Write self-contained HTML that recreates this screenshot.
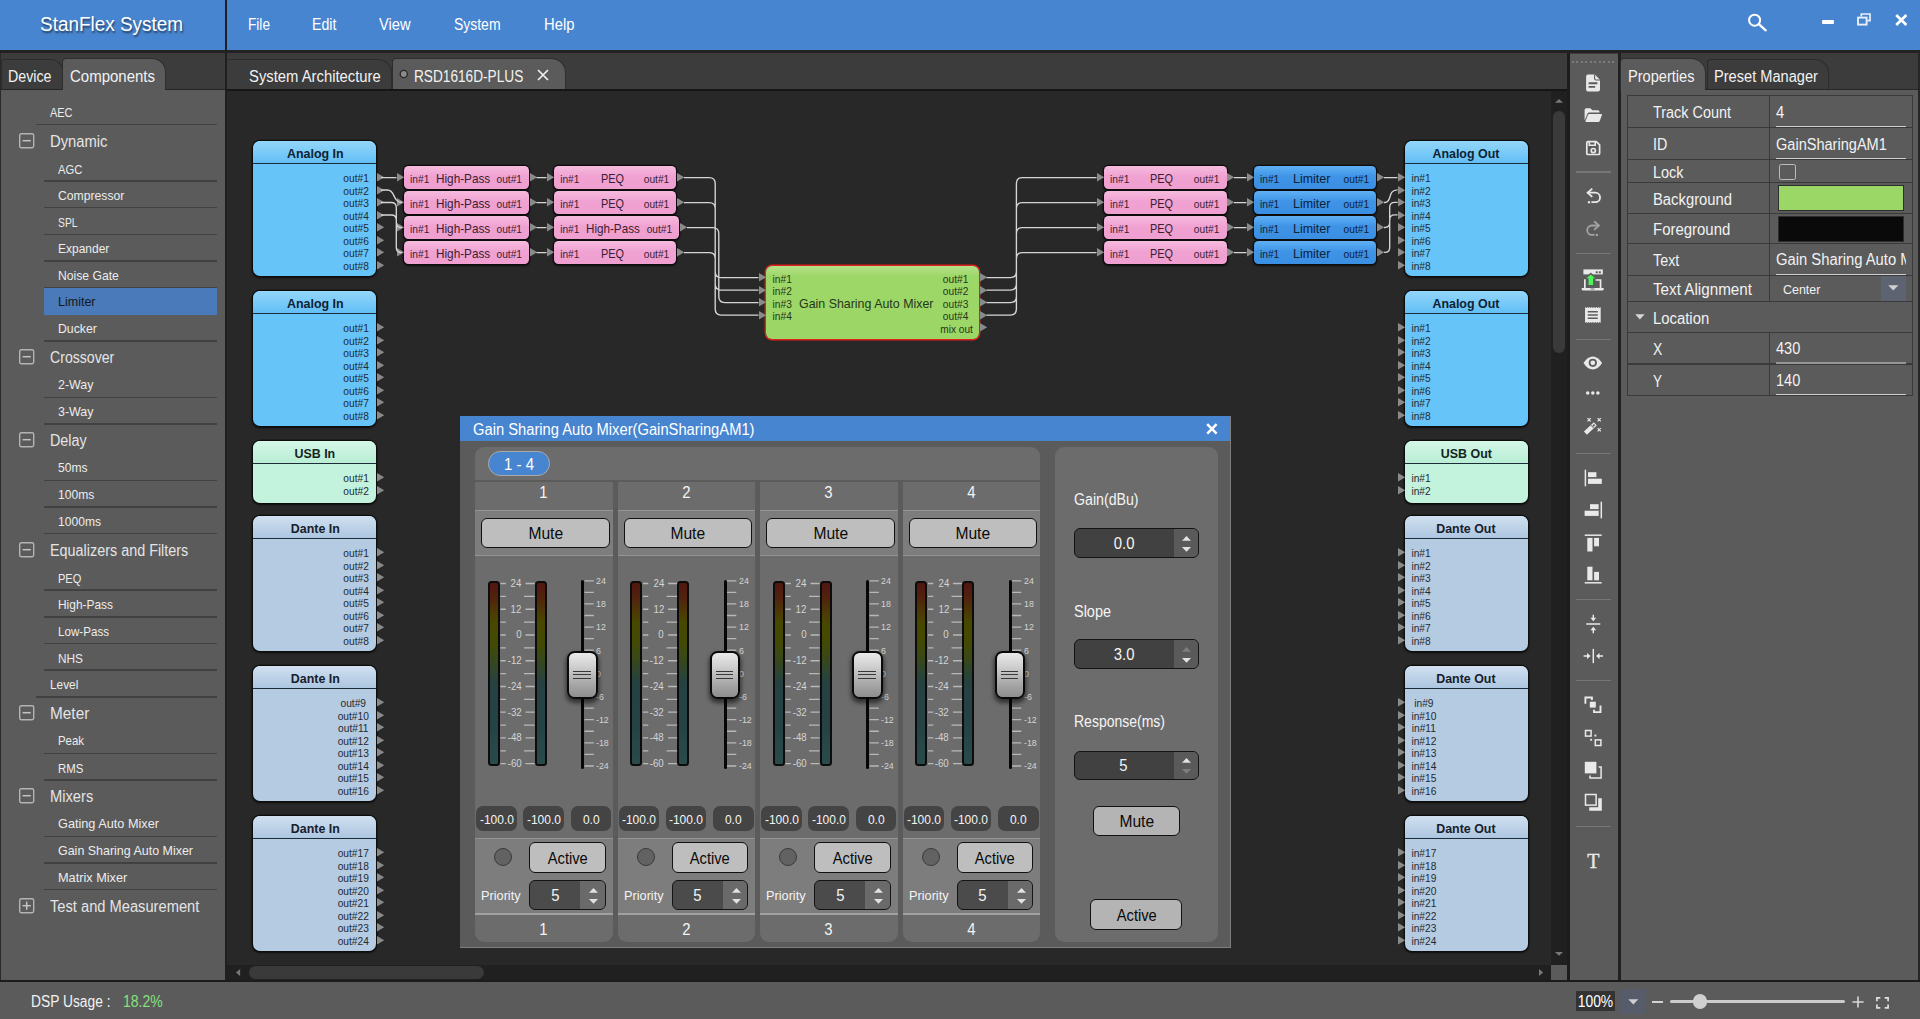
<!DOCTYPE html>
<html lang="en"><head><meta charset="utf-8"><title>StanFlex System</title>
<style>
html,body{margin:0;padding:0;}
body{width:1920px;height:1019px;overflow:hidden;position:relative;background:#3c3c3c;
font-family:"Liberation Sans",sans-serif;}
div,span,svg{position:absolute;box-sizing:border-box;}
.t{white-space:nowrap;line-height:1;display:block;}
svg{overflow:visible;}
</style></head><body>
<div style="left:0px;top:0px;width:1920px;height:50px;background:#4885d0;"></div>
<div style="left:0px;top:50px;width:1920px;height:2.5px;background:#222;"></div>
<div style="left:224.7px;top:0px;width:2.3px;height:981px;background:#202020;"></div>
<span class="t" style="left:35.92px;top:14.4px;font-size:20px;color:#fff;transform:scaleX(0.9460);transform-origin:center center;text-shadow:1px 2px 2px rgba(0,0,0,.55);">StanFlex System</span>
<span class="t" style="left:248px;top:17.08px;font-size:16px;color:#fff;transform:scaleX(0.8533);transform-origin:left center;">File</span>
<span class="t" style="left:312.3px;top:17.08px;font-size:16px;color:#fff;transform:scaleX(0.8850);transform-origin:left center;">Edit</span>
<span class="t" style="left:379.4px;top:17.08px;font-size:16px;color:#fff;transform:scaleX(0.9188);transform-origin:left center;">View</span>
<span class="t" style="left:453.7px;top:17.08px;font-size:16px;color:#fff;transform:scaleX(0.8717);transform-origin:left center;">System</span>
<span class="t" style="left:544.4px;top:17.08px;font-size:16px;color:#fff;transform:scaleX(0.9238);transform-origin:left center;">Help</span>
<svg style="left:1745px;top:8px;" width="30" height="30" viewBox="0 0 30 30"><circle cx="9.6" cy="12.2" r="5.5" fill="none" stroke="#fff" stroke-width="2"/><path d="M13.8 16.2 L20.7 22.3" stroke="#fff" stroke-width="2.4" stroke-linecap="round"/></svg>
<div style="left:1822px;top:20.3px;width:11.6px;height:3.9px;background:#fff;border-radius:1px;"></div>
<svg style="left:1857px;top:13px;" width="15" height="13" viewBox="0 0 15 13"><path d="M4.3 3.6 V1 H13 V7.6 H10.2" fill="none" stroke="#e8eef8" stroke-width="1.7"/><rect x="1" y="4.6" width="8.6" height="7" fill="none" stroke="#e8eef8" stroke-width="1.9"/></svg>
<svg style="left:1895px;top:13.5px;" width="13" height="12" viewBox="0 0 13 12"><path d="M1.2 1 L11.4 11 M11.4 1 L1.2 11" stroke="#fff" stroke-width="2.7"/></svg>
<div style="left:0px;top:52.5px;width:224.7px;height:37.5px;background:#3c3c3c;"></div>
<div style="left:0.5px;top:59.3px;width:62px;height:30.7px;background:#3c3c3c;border:1.3px solid #2c2c2c;border-bottom:none;border-top-right-radius:12px;border-top-left-radius:3px;"></div>
<div style="left:63.3px;top:59.3px;width:102.2px;height:31.2px;background:#5b5b5b;border-top-right-radius:13px;border-top-left-radius:3px;box-shadow:0 0 0 1px #2e2e2e;"></div>
<div style="left:0px;top:88.7px;width:63.3px;height:1.6px;background:#262626;"></div>
<div style="left:165.5px;top:88.7px;width:59.2px;height:1.6px;background:#262626;"></div>
<div style="left:0px;top:90.3px;width:224.7px;height:889.7px;background:#5b5b5b;"></div>
<div style="left:0px;top:52.5px;width:1.2px;height:927.5px;background:#2a2a2a;"></div>
<span class="t" style="left:8px;top:68.98px;font-size:16px;color:#f2f2f2;transform:scaleX(0.8894);transform-origin:left center;">Device</span>
<span class="t" style="left:70px;top:68.98px;font-size:16px;color:#f2f2f2;transform:scaleX(0.9369);transform-origin:left center;">Components</span>
<div style="left:227px;top:52.5px;width:1340.3px;height:37.5px;background:#3c3c3c;"></div>
<div style="left:227px;top:59.3px;width:164.5px;height:30.7px;background:#3c3c3c;border:1.3px solid #2c2c2c;border-bottom:none;border-left:none;border-top-right-radius:14px;"></div>
<div style="left:392.6px;top:59.3px;width:172.4px;height:30.7px;background:#5b5b5b;border-top-right-radius:14px;border-top-left-radius:3px;box-shadow:0 0 0 1px #2e2e2e;"></div>
<span class="t" style="left:248.7px;top:68.98px;font-size:16px;color:#f2f2f2;transform:scaleX(0.9257);transform-origin:left center;">System Architecture</span>
<svg style="left:398.5px;top:69px;" width="10" height="10" viewBox="0 0 10 10"><circle cx="4.8" cy="5" r="3.6" fill="#8a8a8a" stroke="#2a2a2a" stroke-width="1.4"/></svg>
<span class="t" style="left:414.2px;top:68.98px;font-size:16px;color:#f2f2f2;transform:scaleX(0.8535);transform-origin:left center;">RSD1616D-PLUS</span>
<svg style="left:536.5px;top:69px;" width="12" height="12" viewBox="0 0 12 12"><path d="M1 1 L11 11 M11 1 L1 11" stroke="#f0f0f0" stroke-width="1.7"/></svg>
<div style="left:227px;top:88.8px;width:1340.3px;height:2.2px;background:#161616;"></div>
<div style="left:227px;top:91px;width:1340.3px;height:889px;background:#282828;"></div>
<div style="left:1567.3px;top:52.5px;width:2.7px;height:928.5px;background:#1c1c1c;"></div>
<div style="left:1570px;top:54px;width:48.2px;height:926px;background:#5b5b5b;"></div>
<div style="left:1618.2px;top:52.5px;width:2.8px;height:928.5px;background:#202020;"></div>
<div style="left:1621px;top:52.5px;width:299px;height:37.5px;background:#3c3c3c;"></div>
<div style="left:1621px;top:59.3px;width:83.6px;height:31.2px;background:#5b5b5b;border-top-right-radius:14px;border-top-left-radius:3px;box-shadow:0 0 0 1px #2e2e2e;"></div>
<div style="left:1706.6px;top:59.3px;width:122.4px;height:30.7px;background:#3c3c3c;border:1.3px solid #2c2c2c;border-bottom:none;border-top-right-radius:14px;border-top-left-radius:3px;"></div>
<div style="left:1704.6px;top:88.7px;width:215.4px;height:1.6px;background:#262626;"></div>
<div style="left:1621px;top:90.3px;width:299px;height:889.7px;background:#5b5b5b;"></div>
<div style="left:1917.7px;top:52.5px;width:2.3px;height:927.5px;background:#262626;"></div>
<span class="t" style="left:1628px;top:68.98px;font-size:16px;color:#f2f2f2;transform:scaleX(0.9119);transform-origin:left center;">Properties</span>
<span class="t" style="left:1714px;top:68.98px;font-size:16px;color:#f2f2f2;transform:scaleX(0.9127);transform-origin:left center;">Preset Manager</span>
<div style="left:0px;top:979.7px;width:1920px;height:2.3px;background:#1c1c1c;"></div>
<div style="left:0px;top:982px;width:1920px;height:37px;background:#5b5b5b;"></div>
<span class="t" style="left:31px;top:994.08px;font-size:16px;color:#f2f2f2;transform:scaleX(0.8623);transform-origin:left center;">DSP Usage :</span>
<span class="t" style="left:123.3px;top:994.08px;font-size:16px;color:#84e07f;transform:scaleX(0.8751);transform-origin:left center;">18.2%</span>
<div style="left:1576.2px;top:991px;width:39px;height:19.9px;background:#333;"></div>
<span class="t" style="left:1575.24px;top:994.08px;font-size:16px;color:#fff;transform:scaleX(0.8675);transform-origin:center center;">100%</span>
<div style="left:1620px;top:989px;width:25px;height:24.6px;background:#565c69;"></div>
<svg style="left:1627.5px;top:998.5px;" width="11" height="6" viewBox="0 0 11 6"><path d="M0.3 0.3 H10.3 L5.3 5.6 Z" fill="#cfcfcf"/></svg>
<div style="left:1651.7px;top:1001.2px;width:11.6px;height:1.7px;background:#d2d2d2;"></div>
<div style="left:1670px;top:999.9px;width:175px;height:3.3px;background:#cbcbcb;border-radius:2px;"></div>
<div style="left:1692.9px;top:994.2px;width:14.6px;height:14.6px;background:#cfcfcf;border-radius:50%;"></div>
<svg style="left:1851.5px;top:995.5px;" width="12" height="12" viewBox="0 0 12 12"><path d="M6 0.4 V11.6 M0.4 6 H11.6" stroke="#d8d8d8" stroke-width="1.6"/></svg>
<svg style="left:1876px;top:996.5px;" width="13" height="12" viewBox="0 0 13 12"><path d="M0.9 4.2 V0.9 H4.3 M8.7 0.9 H12.1 V4.2 M12.1 7.6 V10.9 H8.7 M4.3 10.9 H0.9 V7.6" fill="none" stroke="#e0e0e0" stroke-width="1.7"/></svg>
<div style="left:36px;top:123.77px;width:181.3px;height:1.4px;background:#414141;"></div>
<span class="t" style="left:50px;top:106.33px;font-size:13.33px;color:#ececec;transform:scaleX(0.8209);transform-origin:left center;">AEC</span>
<svg style="left:18.5px;top:132.77px;" width="15.4" height="15.4" viewBox="0 0 15.4 15.4"><rect x="0.7" y="0.7" width="14" height="14" rx="1.6" fill="none" stroke="#b4b4b4" stroke-width="1.4"/><path d="M3.6 7.7 H11.8" stroke="#c4c4c4" stroke-width="1.5"/></svg>
<span class="t" style="left:50px;top:133.85px;font-size:16px;color:#e4e4e4;transform:scaleX(0.9239);transform-origin:left center;">Dynamic</span>
<div style="left:44px;top:180.18px;width:173.3px;height:1.4px;background:#414141;"></div>
<span class="t" style="left:57.5px;top:162.75px;font-size:13.33px;color:#ececec;transform:scaleX(0.8412);transform-origin:left center;">AGC</span>
<div style="left:44px;top:206.85px;width:173.3px;height:1.4px;background:#414141;"></div>
<span class="t" style="left:57.5px;top:188.62px;font-size:13.33px;color:#ececec;transform:scaleX(0.9133);transform-origin:left center;">Compressor</span>
<div style="left:44px;top:233.52px;width:173.3px;height:1.4px;background:#414141;"></div>
<span class="t" style="left:57.5px;top:216.09px;font-size:13.33px;color:#ececec;transform:scaleX(0.7739);transform-origin:left center;">SPL</span>
<div style="left:44px;top:260.19px;width:173.3px;height:1.4px;background:#414141;"></div>
<span class="t" style="left:57.5px;top:241.95px;font-size:13.33px;color:#ececec;transform:scaleX(0.8990);transform-origin:left center;">Expander</span>
<div style="left:44px;top:286.85px;width:173.3px;height:1.4px;background:#414141;"></div>
<span class="t" style="left:57.5px;top:268.62px;font-size:13.33px;color:#ececec;transform:scaleX(0.9118);transform-origin:left center;">Noise Gate</span>
<div style="left:44px;top:287.85px;width:173.3px;height:26.67px;background:#4a7ab9;"></div>
<span class="t" style="left:57.5px;top:295.29px;font-size:13.33px;color:#101820;transform:scaleX(0.9375);transform-origin:left center;">Limiter</span>
<div style="left:44px;top:340.19px;width:173.3px;height:1.4px;background:#414141;"></div>
<span class="t" style="left:57.5px;top:321.95px;font-size:13.33px;color:#ececec;transform:scaleX(0.9189);transform-origin:left center;">Ducker</span>
<svg style="left:18.5px;top:349.19px;" width="15.4" height="15.4" viewBox="0 0 15.4 15.4"><rect x="0.7" y="0.7" width="14" height="14" rx="1.6" fill="none" stroke="#b4b4b4" stroke-width="1.4"/><path d="M3.6 7.7 H11.8" stroke="#c4c4c4" stroke-width="1.5"/></svg>
<span class="t" style="left:50px;top:350.27px;font-size:16px;color:#e4e4e4;transform:scaleX(0.8819);transform-origin:left center;">Crossover</span>
<div style="left:44px;top:396.6px;width:173.3px;height:1.4px;background:#414141;"></div>
<span class="t" style="left:57.5px;top:378.37px;font-size:13.33px;color:#ececec;transform:scaleX(0.9338);transform-origin:left center;">2-Way</span>
<div style="left:44px;top:423.27px;width:173.3px;height:1.4px;background:#414141;"></div>
<span class="t" style="left:57.5px;top:405.04px;font-size:13.33px;color:#ececec;transform:scaleX(0.9338);transform-origin:left center;">3-Way</span>
<svg style="left:18.5px;top:432.27px;" width="15.4" height="15.4" viewBox="0 0 15.4 15.4"><rect x="0.7" y="0.7" width="14" height="14" rx="1.6" fill="none" stroke="#b4b4b4" stroke-width="1.4"/><path d="M3.6 7.7 H11.8" stroke="#c4c4c4" stroke-width="1.5"/></svg>
<span class="t" style="left:50px;top:433.35px;font-size:16px;color:#e4e4e4;transform:scaleX(0.8971);transform-origin:left center;">Delay</span>
<div style="left:44px;top:479.69px;width:173.3px;height:1.4px;background:#414141;"></div>
<span class="t" style="left:57.5px;top:461.45px;font-size:13.33px;color:#ececec;transform:scaleX(0.9050);transform-origin:left center;">50ms</span>
<div style="left:44px;top:506.35px;width:173.3px;height:1.4px;background:#414141;"></div>
<span class="t" style="left:57.5px;top:488.12px;font-size:13.33px;color:#ececec;transform:scaleX(0.9073);transform-origin:left center;">100ms</span>
<div style="left:44px;top:533.02px;width:173.3px;height:1.4px;background:#414141;"></div>
<span class="t" style="left:57.5px;top:514.79px;font-size:13.33px;color:#ececec;transform:scaleX(0.9067);transform-origin:left center;">1000ms</span>
<svg style="left:18.5px;top:542.02px;" width="15.4" height="15.4" viewBox="0 0 15.4 15.4"><rect x="0.7" y="0.7" width="14" height="14" rx="1.6" fill="none" stroke="#b4b4b4" stroke-width="1.4"/><path d="M3.6 7.7 H11.8" stroke="#c4c4c4" stroke-width="1.5"/></svg>
<span class="t" style="left:50px;top:543.1px;font-size:16px;color:#e4e4e4;transform:scaleX(0.8989);transform-origin:left center;">Equalizers and Filters</span>
<div style="left:44px;top:589.44px;width:173.3px;height:1.4px;background:#414141;"></div>
<span class="t" style="left:57.5px;top:572.01px;font-size:13.33px;color:#ececec;transform:scaleX(0.8277);transform-origin:left center;">PEQ</span>
<div style="left:44px;top:616.11px;width:173.3px;height:1.4px;background:#414141;"></div>
<span class="t" style="left:57.5px;top:597.87px;font-size:13.33px;color:#ececec;transform:scaleX(0.8944);transform-origin:left center;">High-Pass</span>
<div style="left:44px;top:642.77px;width:173.3px;height:1.4px;background:#414141;"></div>
<span class="t" style="left:57.5px;top:624.54px;font-size:13.33px;color:#ececec;transform:scaleX(0.8714);transform-origin:left center;">Low-Pass</span>
<div style="left:44px;top:669.44px;width:173.3px;height:1.4px;background:#414141;"></div>
<span class="t" style="left:57.5px;top:652.01px;font-size:13.33px;color:#ececec;transform:scaleX(0.8883);transform-origin:left center;">NHS</span>
<div style="left:36px;top:696.11px;width:181.3px;height:1.4px;background:#414141;"></div>
<span class="t" style="left:50px;top:677.87px;font-size:13.33px;color:#ececec;transform:scaleX(0.8880);transform-origin:left center;">Level</span>
<svg style="left:18.5px;top:705.11px;" width="15.4" height="15.4" viewBox="0 0 15.4 15.4"><rect x="0.7" y="0.7" width="14" height="14" rx="1.6" fill="none" stroke="#b4b4b4" stroke-width="1.4"/><path d="M3.6 7.7 H11.8" stroke="#c4c4c4" stroke-width="1.5"/></svg>
<span class="t" style="left:50px;top:706.19px;font-size:16px;color:#e4e4e4;transform:scaleX(0.9609);transform-origin:left center;">Meter</span>
<div style="left:44px;top:752.52px;width:173.3px;height:1.4px;background:#414141;"></div>
<span class="t" style="left:57.5px;top:734.29px;font-size:13.33px;color:#ececec;transform:scaleX(0.8557);transform-origin:left center;">Peak</span>
<div style="left:44px;top:779.19px;width:173.3px;height:1.4px;background:#414141;"></div>
<span class="t" style="left:57.5px;top:761.76px;font-size:13.33px;color:#ececec;transform:scaleX(0.8541);transform-origin:left center;">RMS</span>
<svg style="left:18.5px;top:788.19px;" width="15.4" height="15.4" viewBox="0 0 15.4 15.4"><rect x="0.7" y="0.7" width="14" height="14" rx="1.6" fill="none" stroke="#b4b4b4" stroke-width="1.4"/><path d="M3.6 7.7 H11.8" stroke="#c4c4c4" stroke-width="1.5"/></svg>
<span class="t" style="left:50px;top:789.27px;font-size:16px;color:#e4e4e4;transform:scaleX(0.9191);transform-origin:left center;">Mixers</span>
<div style="left:44px;top:835.61px;width:173.3px;height:1.4px;background:#414141;"></div>
<span class="t" style="left:57.5px;top:817.37px;font-size:13.33px;color:#ececec;transform:scaleX(0.9533);transform-origin:left center;">Gating Auto Mixer</span>
<div style="left:44px;top:862.27px;width:173.3px;height:1.4px;background:#414141;"></div>
<span class="t" style="left:57.5px;top:844.04px;font-size:13.33px;color:#ececec;transform:scaleX(0.9343);transform-origin:left center;">Gain Sharing Auto Mixer</span>
<div style="left:44px;top:888.94px;width:173.3px;height:1.4px;background:#414141;"></div>
<span class="t" style="left:57.5px;top:870.71px;font-size:13.33px;color:#ececec;transform:scaleX(0.9549);transform-origin:left center;">Matrix Mixer</span>
<svg style="left:18.5px;top:897.94px;" width="15.4" height="15.4" viewBox="0 0 15.4 15.4"><rect x="0.7" y="0.7" width="14" height="14" rx="1.6" fill="none" stroke="#b4b4b4" stroke-width="1.4"/><path d="M3.6 7.7 H11.8" stroke="#c4c4c4" stroke-width="1.5"/><path d="M7.7 3.6 V11.8" stroke="#c4c4c4" stroke-width="1.5"/></svg>
<span class="t" style="left:50px;top:899.02px;font-size:16px;color:#e4e4e4;transform:scaleX(0.9173);transform-origin:left center;">Test and Measurement</span>
<div style="left:253.4px;top:141px;width:123px;height:135.2px;background:#67c4f8;border-radius:7px;box-shadow:0 0 0 1.2px #0d0d0d,0 1px 2px 1px rgba(0,0,0,.6);overflow:hidden;"><div style="left:0;top:0;width:100%;height:21.6px;background:linear-gradient(#93d6fa,#62bff5)"></div><div style="left:0;top:21.7px;width:100%;height:1.7px;background:#1c2c38"></div></div>
<span class="t" style="left:284.54px;top:147.03px;font-size:13.33px;color:#0f2233;transform:scaleX(0.9320);transform-origin:center center;font-weight:bold;">Analog In</span>
<span class="t" style="left:343.37px;top:174.21px;font-size:10.2px;color:#1e2a33;transform:scaleX(1.0000);transform-origin:center center;">out#1</span>
<svg style="left:376.9px;top:173.4px;" width="7.4" height="8.6" viewBox="0 0 7.4 8.6"><path d="M0 0 L7.2 4.3 L0 8.6 Z" fill="#8a8a8a"/></svg>
<span class="t" style="left:343.37px;top:186.71px;font-size:10.2px;color:#1e2a33;transform:scaleX(1.0000);transform-origin:center center;">out#2</span>
<svg style="left:376.9px;top:185.9px;" width="7.4" height="8.6" viewBox="0 0 7.4 8.6"><path d="M0 0 L7.2 4.3 L0 8.6 Z" fill="#8a8a8a"/></svg>
<span class="t" style="left:343.37px;top:199.21px;font-size:10.2px;color:#1e2a33;transform:scaleX(1.0000);transform-origin:center center;">out#3</span>
<svg style="left:376.9px;top:198.4px;" width="7.4" height="8.6" viewBox="0 0 7.4 8.6"><path d="M0 0 L7.2 4.3 L0 8.6 Z" fill="#8a8a8a"/></svg>
<span class="t" style="left:343.37px;top:211.71px;font-size:10.2px;color:#1e2a33;transform:scaleX(1.0000);transform-origin:center center;">out#4</span>
<svg style="left:376.9px;top:210.9px;" width="7.4" height="8.6" viewBox="0 0 7.4 8.6"><path d="M0 0 L7.2 4.3 L0 8.6 Z" fill="#8a8a8a"/></svg>
<span class="t" style="left:343.37px;top:224.21px;font-size:10.2px;color:#1e2a33;transform:scaleX(1.0000);transform-origin:center center;">out#5</span>
<svg style="left:376.9px;top:223.4px;" width="7.4" height="8.6" viewBox="0 0 7.4 8.6"><path d="M0 0 L7.2 4.3 L0 8.6 Z" fill="#8a8a8a"/></svg>
<span class="t" style="left:343.37px;top:236.71px;font-size:10.2px;color:#1e2a33;transform:scaleX(1.0000);transform-origin:center center;">out#6</span>
<svg style="left:376.9px;top:235.9px;" width="7.4" height="8.6" viewBox="0 0 7.4 8.6"><path d="M0 0 L7.2 4.3 L0 8.6 Z" fill="#8a8a8a"/></svg>
<span class="t" style="left:343.37px;top:249.21px;font-size:10.2px;color:#1e2a33;transform:scaleX(1.0000);transform-origin:center center;">out#7</span>
<svg style="left:376.9px;top:248.4px;" width="7.4" height="8.6" viewBox="0 0 7.4 8.6"><path d="M0 0 L7.2 4.3 L0 8.6 Z" fill="#8a8a8a"/></svg>
<span class="t" style="left:343.37px;top:261.71px;font-size:10.2px;color:#1e2a33;transform:scaleX(1.0000);transform-origin:center center;">out#8</span>
<svg style="left:376.9px;top:260.9px;" width="7.4" height="8.6" viewBox="0 0 7.4 8.6"><path d="M0 0 L7.2 4.3 L0 8.6 Z" fill="#8a8a8a"/></svg>
<div style="left:253.4px;top:291px;width:123px;height:135.2px;background:#67c4f8;border-radius:7px;box-shadow:0 0 0 1.2px #0d0d0d,0 1px 2px 1px rgba(0,0,0,.6);overflow:hidden;"><div style="left:0;top:0;width:100%;height:21.6px;background:linear-gradient(#93d6fa,#62bff5)"></div><div style="left:0;top:21.7px;width:100%;height:1.7px;background:#1c2c38"></div></div>
<span class="t" style="left:284.54px;top:297.03px;font-size:13.33px;color:#0f2233;transform:scaleX(0.9320);transform-origin:center center;font-weight:bold;">Analog In</span>
<span class="t" style="left:343.37px;top:324.21px;font-size:10.2px;color:#1e2a33;transform:scaleX(1.0000);transform-origin:center center;">out#1</span>
<svg style="left:376.9px;top:323.4px;" width="7.4" height="8.6" viewBox="0 0 7.4 8.6"><path d="M0 0 L7.2 4.3 L0 8.6 Z" fill="#8a8a8a"/></svg>
<span class="t" style="left:343.37px;top:336.71px;font-size:10.2px;color:#1e2a33;transform:scaleX(1.0000);transform-origin:center center;">out#2</span>
<svg style="left:376.9px;top:335.9px;" width="7.4" height="8.6" viewBox="0 0 7.4 8.6"><path d="M0 0 L7.2 4.3 L0 8.6 Z" fill="#8a8a8a"/></svg>
<span class="t" style="left:343.37px;top:349.21px;font-size:10.2px;color:#1e2a33;transform:scaleX(1.0000);transform-origin:center center;">out#3</span>
<svg style="left:376.9px;top:348.4px;" width="7.4" height="8.6" viewBox="0 0 7.4 8.6"><path d="M0 0 L7.2 4.3 L0 8.6 Z" fill="#8a8a8a"/></svg>
<span class="t" style="left:343.37px;top:361.71px;font-size:10.2px;color:#1e2a33;transform:scaleX(1.0000);transform-origin:center center;">out#4</span>
<svg style="left:376.9px;top:360.9px;" width="7.4" height="8.6" viewBox="0 0 7.4 8.6"><path d="M0 0 L7.2 4.3 L0 8.6 Z" fill="#8a8a8a"/></svg>
<span class="t" style="left:343.37px;top:374.21px;font-size:10.2px;color:#1e2a33;transform:scaleX(1.0000);transform-origin:center center;">out#5</span>
<svg style="left:376.9px;top:373.4px;" width="7.4" height="8.6" viewBox="0 0 7.4 8.6"><path d="M0 0 L7.2 4.3 L0 8.6 Z" fill="#8a8a8a"/></svg>
<span class="t" style="left:343.37px;top:386.71px;font-size:10.2px;color:#1e2a33;transform:scaleX(1.0000);transform-origin:center center;">out#6</span>
<svg style="left:376.9px;top:385.9px;" width="7.4" height="8.6" viewBox="0 0 7.4 8.6"><path d="M0 0 L7.2 4.3 L0 8.6 Z" fill="#8a8a8a"/></svg>
<span class="t" style="left:343.37px;top:399.21px;font-size:10.2px;color:#1e2a33;transform:scaleX(1.0000);transform-origin:center center;">out#7</span>
<svg style="left:376.9px;top:398.4px;" width="7.4" height="8.6" viewBox="0 0 7.4 8.6"><path d="M0 0 L7.2 4.3 L0 8.6 Z" fill="#8a8a8a"/></svg>
<span class="t" style="left:343.37px;top:411.71px;font-size:10.2px;color:#1e2a33;transform:scaleX(1.0000);transform-origin:center center;">out#8</span>
<svg style="left:376.9px;top:410.9px;" width="7.4" height="8.6" viewBox="0 0 7.4 8.6"><path d="M0 0 L7.2 4.3 L0 8.6 Z" fill="#8a8a8a"/></svg>
<div style="left:253.4px;top:441px;width:123px;height:62.4px;background:#c3f3dd;border-radius:7px;box-shadow:0 0 0 1.2px #0d0d0d,0 1px 2px 1px rgba(0,0,0,.6);overflow:hidden;"><div style="left:0;top:0;width:100%;height:21.6px;background:linear-gradient(#d4f7e7,#b9eed5)"></div><div style="left:0;top:21.7px;width:100%;height:1.7px;background:#1c2c38"></div></div>
<span class="t" style="left:293.05px;top:447.03px;font-size:13.33px;color:#14251d;transform:scaleX(0.9320);transform-origin:center center;font-weight:bold;">USB In</span>
<span class="t" style="left:343.37px;top:474.21px;font-size:10.2px;color:#1e2a33;transform:scaleX(1.0000);transform-origin:center center;">out#1</span>
<svg style="left:376.9px;top:473.4px;" width="7.4" height="8.6" viewBox="0 0 7.4 8.6"><path d="M0 0 L7.2 4.3 L0 8.6 Z" fill="#8a8a8a"/></svg>
<span class="t" style="left:343.37px;top:486.71px;font-size:10.2px;color:#1e2a33;transform:scaleX(1.0000);transform-origin:center center;">out#2</span>
<svg style="left:376.9px;top:485.9px;" width="7.4" height="8.6" viewBox="0 0 7.4 8.6"><path d="M0 0 L7.2 4.3 L0 8.6 Z" fill="#8a8a8a"/></svg>
<div style="left:253.4px;top:516px;width:123px;height:135.2px;background:#b5cbe1;border-radius:7px;box-shadow:0 0 0 1.2px #0d0d0d,0 1px 2px 1px rgba(0,0,0,.6);overflow:hidden;"><div style="left:0;top:0;width:100%;height:21.6px;background:linear-gradient(#d0e0f0,#adc6e0)"></div><div style="left:0;top:21.7px;width:100%;height:1.7px;background:#1c2c38"></div></div>
<span class="t" style="left:288.61px;top:522.03px;font-size:13.33px;color:#17202b;transform:scaleX(0.9320);transform-origin:center center;font-weight:bold;">Dante In</span>
<span class="t" style="left:343.37px;top:549.21px;font-size:10.2px;color:#1e2a33;transform:scaleX(1.0000);transform-origin:center center;">out#1</span>
<svg style="left:376.9px;top:548.4px;" width="7.4" height="8.6" viewBox="0 0 7.4 8.6"><path d="M0 0 L7.2 4.3 L0 8.6 Z" fill="#8a8a8a"/></svg>
<span class="t" style="left:343.37px;top:561.71px;font-size:10.2px;color:#1e2a33;transform:scaleX(1.0000);transform-origin:center center;">out#2</span>
<svg style="left:376.9px;top:560.9px;" width="7.4" height="8.6" viewBox="0 0 7.4 8.6"><path d="M0 0 L7.2 4.3 L0 8.6 Z" fill="#8a8a8a"/></svg>
<span class="t" style="left:343.37px;top:574.21px;font-size:10.2px;color:#1e2a33;transform:scaleX(1.0000);transform-origin:center center;">out#3</span>
<svg style="left:376.9px;top:573.4px;" width="7.4" height="8.6" viewBox="0 0 7.4 8.6"><path d="M0 0 L7.2 4.3 L0 8.6 Z" fill="#8a8a8a"/></svg>
<span class="t" style="left:343.37px;top:586.71px;font-size:10.2px;color:#1e2a33;transform:scaleX(1.0000);transform-origin:center center;">out#4</span>
<svg style="left:376.9px;top:585.9px;" width="7.4" height="8.6" viewBox="0 0 7.4 8.6"><path d="M0 0 L7.2 4.3 L0 8.6 Z" fill="#8a8a8a"/></svg>
<span class="t" style="left:343.37px;top:599.21px;font-size:10.2px;color:#1e2a33;transform:scaleX(1.0000);transform-origin:center center;">out#5</span>
<svg style="left:376.9px;top:598.4px;" width="7.4" height="8.6" viewBox="0 0 7.4 8.6"><path d="M0 0 L7.2 4.3 L0 8.6 Z" fill="#8a8a8a"/></svg>
<span class="t" style="left:343.37px;top:611.71px;font-size:10.2px;color:#1e2a33;transform:scaleX(1.0000);transform-origin:center center;">out#6</span>
<svg style="left:376.9px;top:610.9px;" width="7.4" height="8.6" viewBox="0 0 7.4 8.6"><path d="M0 0 L7.2 4.3 L0 8.6 Z" fill="#8a8a8a"/></svg>
<span class="t" style="left:343.37px;top:624.21px;font-size:10.2px;color:#1e2a33;transform:scaleX(1.0000);transform-origin:center center;">out#7</span>
<svg style="left:376.9px;top:623.4px;" width="7.4" height="8.6" viewBox="0 0 7.4 8.6"><path d="M0 0 L7.2 4.3 L0 8.6 Z" fill="#8a8a8a"/></svg>
<span class="t" style="left:343.37px;top:636.71px;font-size:10.2px;color:#1e2a33;transform:scaleX(1.0000);transform-origin:center center;">out#8</span>
<svg style="left:376.9px;top:635.9px;" width="7.4" height="8.6" viewBox="0 0 7.4 8.6"><path d="M0 0 L7.2 4.3 L0 8.6 Z" fill="#8a8a8a"/></svg>
<div style="left:253.4px;top:666px;width:123px;height:135.2px;background:#b5cbe1;border-radius:7px;box-shadow:0 0 0 1.2px #0d0d0d,0 1px 2px 1px rgba(0,0,0,.6);overflow:hidden;"><div style="left:0;top:0;width:100%;height:21.6px;background:linear-gradient(#d0e0f0,#adc6e0)"></div><div style="left:0;top:21.7px;width:100%;height:1.7px;background:#1c2c38"></div></div>
<span class="t" style="left:288.61px;top:672.03px;font-size:13.33px;color:#17202b;transform:scaleX(0.9320);transform-origin:center center;font-weight:bold;">Dante In</span>
<span class="t" style="left:340.54px;top:699.21px;font-size:10.2px;color:#1e2a33;transform:scaleX(1.0000);transform-origin:center center;">out#9</span>
<svg style="left:376.9px;top:698.4px;" width="7.4" height="8.6" viewBox="0 0 7.4 8.6"><path d="M0 0 L7.2 4.3 L0 8.6 Z" fill="#8a8a8a"/></svg>
<span class="t" style="left:337.7px;top:711.71px;font-size:10.2px;color:#1e2a33;transform:scaleX(1.0000);transform-origin:center center;">out#10</span>
<svg style="left:376.9px;top:710.9px;" width="7.4" height="8.6" viewBox="0 0 7.4 8.6"><path d="M0 0 L7.2 4.3 L0 8.6 Z" fill="#8a8a8a"/></svg>
<span class="t" style="left:338.08px;top:724.21px;font-size:10.2px;color:#1e2a33;transform:scaleX(1.0000);transform-origin:center center;">out#11</span>
<svg style="left:376.9px;top:723.4px;" width="7.4" height="8.6" viewBox="0 0 7.4 8.6"><path d="M0 0 L7.2 4.3 L0 8.6 Z" fill="#8a8a8a"/></svg>
<span class="t" style="left:337.7px;top:736.71px;font-size:10.2px;color:#1e2a33;transform:scaleX(1.0000);transform-origin:center center;">out#12</span>
<svg style="left:376.9px;top:735.9px;" width="7.4" height="8.6" viewBox="0 0 7.4 8.6"><path d="M0 0 L7.2 4.3 L0 8.6 Z" fill="#8a8a8a"/></svg>
<span class="t" style="left:337.7px;top:749.21px;font-size:10.2px;color:#1e2a33;transform:scaleX(1.0000);transform-origin:center center;">out#13</span>
<svg style="left:376.9px;top:748.4px;" width="7.4" height="8.6" viewBox="0 0 7.4 8.6"><path d="M0 0 L7.2 4.3 L0 8.6 Z" fill="#8a8a8a"/></svg>
<span class="t" style="left:337.7px;top:761.71px;font-size:10.2px;color:#1e2a33;transform:scaleX(1.0000);transform-origin:center center;">out#14</span>
<svg style="left:376.9px;top:760.9px;" width="7.4" height="8.6" viewBox="0 0 7.4 8.6"><path d="M0 0 L7.2 4.3 L0 8.6 Z" fill="#8a8a8a"/></svg>
<span class="t" style="left:337.7px;top:774.21px;font-size:10.2px;color:#1e2a33;transform:scaleX(1.0000);transform-origin:center center;">out#15</span>
<svg style="left:376.9px;top:773.4px;" width="7.4" height="8.6" viewBox="0 0 7.4 8.6"><path d="M0 0 L7.2 4.3 L0 8.6 Z" fill="#8a8a8a"/></svg>
<span class="t" style="left:337.7px;top:786.71px;font-size:10.2px;color:#1e2a33;transform:scaleX(1.0000);transform-origin:center center;">out#16</span>
<svg style="left:376.9px;top:785.9px;" width="7.4" height="8.6" viewBox="0 0 7.4 8.6"><path d="M0 0 L7.2 4.3 L0 8.6 Z" fill="#8a8a8a"/></svg>
<div style="left:253.4px;top:816px;width:123px;height:135.2px;background:#b5cbe1;border-radius:7px;box-shadow:0 0 0 1.2px #0d0d0d,0 1px 2px 1px rgba(0,0,0,.6);overflow:hidden;"><div style="left:0;top:0;width:100%;height:21.6px;background:linear-gradient(#d0e0f0,#adc6e0)"></div><div style="left:0;top:21.7px;width:100%;height:1.7px;background:#1c2c38"></div></div>
<span class="t" style="left:288.61px;top:822.03px;font-size:13.33px;color:#17202b;transform:scaleX(0.9320);transform-origin:center center;font-weight:bold;">Dante In</span>
<span class="t" style="left:337.7px;top:849.21px;font-size:10.2px;color:#1e2a33;transform:scaleX(1.0000);transform-origin:center center;">out#17</span>
<svg style="left:376.9px;top:848.4px;" width="7.4" height="8.6" viewBox="0 0 7.4 8.6"><path d="M0 0 L7.2 4.3 L0 8.6 Z" fill="#8a8a8a"/></svg>
<span class="t" style="left:337.7px;top:861.71px;font-size:10.2px;color:#1e2a33;transform:scaleX(1.0000);transform-origin:center center;">out#18</span>
<svg style="left:376.9px;top:860.9px;" width="7.4" height="8.6" viewBox="0 0 7.4 8.6"><path d="M0 0 L7.2 4.3 L0 8.6 Z" fill="#8a8a8a"/></svg>
<span class="t" style="left:337.7px;top:874.21px;font-size:10.2px;color:#1e2a33;transform:scaleX(1.0000);transform-origin:center center;">out#19</span>
<svg style="left:376.9px;top:873.4px;" width="7.4" height="8.6" viewBox="0 0 7.4 8.6"><path d="M0 0 L7.2 4.3 L0 8.6 Z" fill="#8a8a8a"/></svg>
<span class="t" style="left:337.7px;top:886.71px;font-size:10.2px;color:#1e2a33;transform:scaleX(1.0000);transform-origin:center center;">out#20</span>
<svg style="left:376.9px;top:885.9px;" width="7.4" height="8.6" viewBox="0 0 7.4 8.6"><path d="M0 0 L7.2 4.3 L0 8.6 Z" fill="#8a8a8a"/></svg>
<span class="t" style="left:337.7px;top:899.21px;font-size:10.2px;color:#1e2a33;transform:scaleX(1.0000);transform-origin:center center;">out#21</span>
<svg style="left:376.9px;top:898.4px;" width="7.4" height="8.6" viewBox="0 0 7.4 8.6"><path d="M0 0 L7.2 4.3 L0 8.6 Z" fill="#8a8a8a"/></svg>
<span class="t" style="left:337.7px;top:911.71px;font-size:10.2px;color:#1e2a33;transform:scaleX(1.0000);transform-origin:center center;">out#22</span>
<svg style="left:376.9px;top:910.9px;" width="7.4" height="8.6" viewBox="0 0 7.4 8.6"><path d="M0 0 L7.2 4.3 L0 8.6 Z" fill="#8a8a8a"/></svg>
<span class="t" style="left:337.7px;top:924.21px;font-size:10.2px;color:#1e2a33;transform:scaleX(1.0000);transform-origin:center center;">out#23</span>
<svg style="left:376.9px;top:923.4px;" width="7.4" height="8.6" viewBox="0 0 7.4 8.6"><path d="M0 0 L7.2 4.3 L0 8.6 Z" fill="#8a8a8a"/></svg>
<span class="t" style="left:337.7px;top:936.71px;font-size:10.2px;color:#1e2a33;transform:scaleX(1.0000);transform-origin:center center;">out#24</span>
<svg style="left:376.9px;top:935.9px;" width="7.4" height="8.6" viewBox="0 0 7.4 8.6"><path d="M0 0 L7.2 4.3 L0 8.6 Z" fill="#8a8a8a"/></svg>
<div style="left:1404.8px;top:141px;width:123px;height:135.2px;background:#67c4f8;border-radius:7px;box-shadow:0 0 0 1.2px #0d0d0d,0 1px 2px 1px rgba(0,0,0,.6);overflow:hidden;"><div style="left:0;top:0;width:100%;height:21.6px;background:linear-gradient(#93d6fa,#62bff5)"></div><div style="left:0;top:21.7px;width:100%;height:1.7px;background:#1c2c38"></div></div>
<span class="t" style="left:1430.39px;top:147.03px;font-size:13.33px;color:#0f2233;transform:scaleX(0.9320);transform-origin:center center;font-weight:bold;">Analog Out</span>
<span class="t" style="left:1411.4px;top:174.21px;font-size:10.2px;color:#1e2a33;transform:scaleX(1.0000);transform-origin:center center;">in#1</span>
<svg style="left:1397.9px;top:173.4px;" width="7.4" height="8.6" viewBox="0 0 7.4 8.6"><path d="M0 0 L7.2 4.3 L0 8.6 Z" fill="#8a8a8a"/></svg>
<span class="t" style="left:1411.4px;top:186.71px;font-size:10.2px;color:#1e2a33;transform:scaleX(1.0000);transform-origin:center center;">in#2</span>
<svg style="left:1397.9px;top:185.9px;" width="7.4" height="8.6" viewBox="0 0 7.4 8.6"><path d="M0 0 L7.2 4.3 L0 8.6 Z" fill="#8a8a8a"/></svg>
<span class="t" style="left:1411.4px;top:199.21px;font-size:10.2px;color:#1e2a33;transform:scaleX(1.0000);transform-origin:center center;">in#3</span>
<svg style="left:1397.9px;top:198.4px;" width="7.4" height="8.6" viewBox="0 0 7.4 8.6"><path d="M0 0 L7.2 4.3 L0 8.6 Z" fill="#8a8a8a"/></svg>
<span class="t" style="left:1411.4px;top:211.71px;font-size:10.2px;color:#1e2a33;transform:scaleX(1.0000);transform-origin:center center;">in#4</span>
<svg style="left:1397.9px;top:210.9px;" width="7.4" height="8.6" viewBox="0 0 7.4 8.6"><path d="M0 0 L7.2 4.3 L0 8.6 Z" fill="#8a8a8a"/></svg>
<span class="t" style="left:1411.4px;top:224.21px;font-size:10.2px;color:#1e2a33;transform:scaleX(1.0000);transform-origin:center center;">in#5</span>
<svg style="left:1397.9px;top:223.4px;" width="7.4" height="8.6" viewBox="0 0 7.4 8.6"><path d="M0 0 L7.2 4.3 L0 8.6 Z" fill="#8a8a8a"/></svg>
<span class="t" style="left:1411.4px;top:236.71px;font-size:10.2px;color:#1e2a33;transform:scaleX(1.0000);transform-origin:center center;">in#6</span>
<svg style="left:1397.9px;top:235.9px;" width="7.4" height="8.6" viewBox="0 0 7.4 8.6"><path d="M0 0 L7.2 4.3 L0 8.6 Z" fill="#8a8a8a"/></svg>
<span class="t" style="left:1411.4px;top:249.21px;font-size:10.2px;color:#1e2a33;transform:scaleX(1.0000);transform-origin:center center;">in#7</span>
<svg style="left:1397.9px;top:248.4px;" width="7.4" height="8.6" viewBox="0 0 7.4 8.6"><path d="M0 0 L7.2 4.3 L0 8.6 Z" fill="#8a8a8a"/></svg>
<span class="t" style="left:1411.4px;top:261.71px;font-size:10.2px;color:#1e2a33;transform:scaleX(1.0000);transform-origin:center center;">in#8</span>
<svg style="left:1397.9px;top:260.9px;" width="7.4" height="8.6" viewBox="0 0 7.4 8.6"><path d="M0 0 L7.2 4.3 L0 8.6 Z" fill="#8a8a8a"/></svg>
<div style="left:1404.8px;top:291px;width:123px;height:135.2px;background:#67c4f8;border-radius:7px;box-shadow:0 0 0 1.2px #0d0d0d,0 1px 2px 1px rgba(0,0,0,.6);overflow:hidden;"><div style="left:0;top:0;width:100%;height:21.6px;background:linear-gradient(#93d6fa,#62bff5)"></div><div style="left:0;top:21.7px;width:100%;height:1.7px;background:#1c2c38"></div></div>
<span class="t" style="left:1430.39px;top:297.03px;font-size:13.33px;color:#0f2233;transform:scaleX(0.9320);transform-origin:center center;font-weight:bold;">Analog Out</span>
<span class="t" style="left:1411.4px;top:324.21px;font-size:10.2px;color:#1e2a33;transform:scaleX(1.0000);transform-origin:center center;">in#1</span>
<svg style="left:1397.9px;top:323.4px;" width="7.4" height="8.6" viewBox="0 0 7.4 8.6"><path d="M0 0 L7.2 4.3 L0 8.6 Z" fill="#8a8a8a"/></svg>
<span class="t" style="left:1411.4px;top:336.71px;font-size:10.2px;color:#1e2a33;transform:scaleX(1.0000);transform-origin:center center;">in#2</span>
<svg style="left:1397.9px;top:335.9px;" width="7.4" height="8.6" viewBox="0 0 7.4 8.6"><path d="M0 0 L7.2 4.3 L0 8.6 Z" fill="#8a8a8a"/></svg>
<span class="t" style="left:1411.4px;top:349.21px;font-size:10.2px;color:#1e2a33;transform:scaleX(1.0000);transform-origin:center center;">in#3</span>
<svg style="left:1397.9px;top:348.4px;" width="7.4" height="8.6" viewBox="0 0 7.4 8.6"><path d="M0 0 L7.2 4.3 L0 8.6 Z" fill="#8a8a8a"/></svg>
<span class="t" style="left:1411.4px;top:361.71px;font-size:10.2px;color:#1e2a33;transform:scaleX(1.0000);transform-origin:center center;">in#4</span>
<svg style="left:1397.9px;top:360.9px;" width="7.4" height="8.6" viewBox="0 0 7.4 8.6"><path d="M0 0 L7.2 4.3 L0 8.6 Z" fill="#8a8a8a"/></svg>
<span class="t" style="left:1411.4px;top:374.21px;font-size:10.2px;color:#1e2a33;transform:scaleX(1.0000);transform-origin:center center;">in#5</span>
<svg style="left:1397.9px;top:373.4px;" width="7.4" height="8.6" viewBox="0 0 7.4 8.6"><path d="M0 0 L7.2 4.3 L0 8.6 Z" fill="#8a8a8a"/></svg>
<span class="t" style="left:1411.4px;top:386.71px;font-size:10.2px;color:#1e2a33;transform:scaleX(1.0000);transform-origin:center center;">in#6</span>
<svg style="left:1397.9px;top:385.9px;" width="7.4" height="8.6" viewBox="0 0 7.4 8.6"><path d="M0 0 L7.2 4.3 L0 8.6 Z" fill="#8a8a8a"/></svg>
<span class="t" style="left:1411.4px;top:399.21px;font-size:10.2px;color:#1e2a33;transform:scaleX(1.0000);transform-origin:center center;">in#7</span>
<svg style="left:1397.9px;top:398.4px;" width="7.4" height="8.6" viewBox="0 0 7.4 8.6"><path d="M0 0 L7.2 4.3 L0 8.6 Z" fill="#8a8a8a"/></svg>
<span class="t" style="left:1411.4px;top:411.71px;font-size:10.2px;color:#1e2a33;transform:scaleX(1.0000);transform-origin:center center;">in#8</span>
<svg style="left:1397.9px;top:410.9px;" width="7.4" height="8.6" viewBox="0 0 7.4 8.6"><path d="M0 0 L7.2 4.3 L0 8.6 Z" fill="#8a8a8a"/></svg>
<div style="left:1404.8px;top:441px;width:123px;height:62.4px;background:#c3f3dd;border-radius:7px;box-shadow:0 0 0 1.2px #0d0d0d,0 1px 2px 1px rgba(0,0,0,.6);overflow:hidden;"><div style="left:0;top:0;width:100%;height:21.6px;background:linear-gradient(#d4f7e7,#b9eed5)"></div><div style="left:0;top:21.7px;width:100%;height:1.7px;background:#1c2c38"></div></div>
<span class="t" style="left:1438.9px;top:447.03px;font-size:13.33px;color:#14251d;transform:scaleX(0.9320);transform-origin:center center;font-weight:bold;">USB Out</span>
<span class="t" style="left:1411.4px;top:474.21px;font-size:10.2px;color:#1e2a33;transform:scaleX(1.0000);transform-origin:center center;">in#1</span>
<svg style="left:1397.9px;top:473.4px;" width="7.4" height="8.6" viewBox="0 0 7.4 8.6"><path d="M0 0 L7.2 4.3 L0 8.6 Z" fill="#8a8a8a"/></svg>
<span class="t" style="left:1411.4px;top:486.71px;font-size:10.2px;color:#1e2a33;transform:scaleX(1.0000);transform-origin:center center;">in#2</span>
<svg style="left:1397.9px;top:485.9px;" width="7.4" height="8.6" viewBox="0 0 7.4 8.6"><path d="M0 0 L7.2 4.3 L0 8.6 Z" fill="#8a8a8a"/></svg>
<div style="left:1404.8px;top:516px;width:123px;height:135.2px;background:#b5cbe1;border-radius:7px;box-shadow:0 0 0 1.2px #0d0d0d,0 1px 2px 1px rgba(0,0,0,.6);overflow:hidden;"><div style="left:0;top:0;width:100%;height:21.6px;background:linear-gradient(#d0e0f0,#adc6e0)"></div><div style="left:0;top:21.7px;width:100%;height:1.7px;background:#1c2c38"></div></div>
<span class="t" style="left:1434.45px;top:522.03px;font-size:13.33px;color:#17202b;transform:scaleX(0.9320);transform-origin:center center;font-weight:bold;">Dante Out</span>
<span class="t" style="left:1411.4px;top:549.21px;font-size:10.2px;color:#1e2a33;transform:scaleX(1.0000);transform-origin:center center;">in#1</span>
<svg style="left:1397.9px;top:548.4px;" width="7.4" height="8.6" viewBox="0 0 7.4 8.6"><path d="M0 0 L7.2 4.3 L0 8.6 Z" fill="#8a8a8a"/></svg>
<span class="t" style="left:1411.4px;top:561.71px;font-size:10.2px;color:#1e2a33;transform:scaleX(1.0000);transform-origin:center center;">in#2</span>
<svg style="left:1397.9px;top:560.9px;" width="7.4" height="8.6" viewBox="0 0 7.4 8.6"><path d="M0 0 L7.2 4.3 L0 8.6 Z" fill="#8a8a8a"/></svg>
<span class="t" style="left:1411.4px;top:574.21px;font-size:10.2px;color:#1e2a33;transform:scaleX(1.0000);transform-origin:center center;">in#3</span>
<svg style="left:1397.9px;top:573.4px;" width="7.4" height="8.6" viewBox="0 0 7.4 8.6"><path d="M0 0 L7.2 4.3 L0 8.6 Z" fill="#8a8a8a"/></svg>
<span class="t" style="left:1411.4px;top:586.71px;font-size:10.2px;color:#1e2a33;transform:scaleX(1.0000);transform-origin:center center;">in#4</span>
<svg style="left:1397.9px;top:585.9px;" width="7.4" height="8.6" viewBox="0 0 7.4 8.6"><path d="M0 0 L7.2 4.3 L0 8.6 Z" fill="#8a8a8a"/></svg>
<span class="t" style="left:1411.4px;top:599.21px;font-size:10.2px;color:#1e2a33;transform:scaleX(1.0000);transform-origin:center center;">in#5</span>
<svg style="left:1397.9px;top:598.4px;" width="7.4" height="8.6" viewBox="0 0 7.4 8.6"><path d="M0 0 L7.2 4.3 L0 8.6 Z" fill="#8a8a8a"/></svg>
<span class="t" style="left:1411.4px;top:611.71px;font-size:10.2px;color:#1e2a33;transform:scaleX(1.0000);transform-origin:center center;">in#6</span>
<svg style="left:1397.9px;top:610.9px;" width="7.4" height="8.6" viewBox="0 0 7.4 8.6"><path d="M0 0 L7.2 4.3 L0 8.6 Z" fill="#8a8a8a"/></svg>
<span class="t" style="left:1411.4px;top:624.21px;font-size:10.2px;color:#1e2a33;transform:scaleX(1.0000);transform-origin:center center;">in#7</span>
<svg style="left:1397.9px;top:623.4px;" width="7.4" height="8.6" viewBox="0 0 7.4 8.6"><path d="M0 0 L7.2 4.3 L0 8.6 Z" fill="#8a8a8a"/></svg>
<span class="t" style="left:1411.4px;top:636.71px;font-size:10.2px;color:#1e2a33;transform:scaleX(1.0000);transform-origin:center center;">in#8</span>
<svg style="left:1397.9px;top:635.9px;" width="7.4" height="8.6" viewBox="0 0 7.4 8.6"><path d="M0 0 L7.2 4.3 L0 8.6 Z" fill="#8a8a8a"/></svg>
<div style="left:1404.8px;top:666px;width:123px;height:135.2px;background:#b5cbe1;border-radius:7px;box-shadow:0 0 0 1.2px #0d0d0d,0 1px 2px 1px rgba(0,0,0,.6);overflow:hidden;"><div style="left:0;top:0;width:100%;height:21.6px;background:linear-gradient(#d0e0f0,#adc6e0)"></div><div style="left:0;top:21.7px;width:100%;height:1.7px;background:#1c2c38"></div></div>
<span class="t" style="left:1434.45px;top:672.03px;font-size:13.33px;color:#17202b;transform:scaleX(0.9320);transform-origin:center center;font-weight:bold;">Dante Out</span>
<span class="t" style="left:1414.24px;top:699.21px;font-size:10.2px;color:#1e2a33;transform:scaleX(1.0000);transform-origin:center center;">in#9</span>
<svg style="left:1397.9px;top:698.4px;" width="7.4" height="8.6" viewBox="0 0 7.4 8.6"><path d="M0 0 L7.2 4.3 L0 8.6 Z" fill="#8a8a8a"/></svg>
<span class="t" style="left:1411.4px;top:711.71px;font-size:10.2px;color:#1e2a33;transform:scaleX(1.0000);transform-origin:center center;">in#10</span>
<svg style="left:1397.9px;top:710.9px;" width="7.4" height="8.6" viewBox="0 0 7.4 8.6"><path d="M0 0 L7.2 4.3 L0 8.6 Z" fill="#8a8a8a"/></svg>
<span class="t" style="left:1411.78px;top:724.21px;font-size:10.2px;color:#1e2a33;transform:scaleX(1.0000);transform-origin:center center;">in#11</span>
<svg style="left:1397.9px;top:723.4px;" width="7.4" height="8.6" viewBox="0 0 7.4 8.6"><path d="M0 0 L7.2 4.3 L0 8.6 Z" fill="#8a8a8a"/></svg>
<span class="t" style="left:1411.4px;top:736.71px;font-size:10.2px;color:#1e2a33;transform:scaleX(1.0000);transform-origin:center center;">in#12</span>
<svg style="left:1397.9px;top:735.9px;" width="7.4" height="8.6" viewBox="0 0 7.4 8.6"><path d="M0 0 L7.2 4.3 L0 8.6 Z" fill="#8a8a8a"/></svg>
<span class="t" style="left:1411.4px;top:749.21px;font-size:10.2px;color:#1e2a33;transform:scaleX(1.0000);transform-origin:center center;">in#13</span>
<svg style="left:1397.9px;top:748.4px;" width="7.4" height="8.6" viewBox="0 0 7.4 8.6"><path d="M0 0 L7.2 4.3 L0 8.6 Z" fill="#8a8a8a"/></svg>
<span class="t" style="left:1411.4px;top:761.71px;font-size:10.2px;color:#1e2a33;transform:scaleX(1.0000);transform-origin:center center;">in#14</span>
<svg style="left:1397.9px;top:760.9px;" width="7.4" height="8.6" viewBox="0 0 7.4 8.6"><path d="M0 0 L7.2 4.3 L0 8.6 Z" fill="#8a8a8a"/></svg>
<span class="t" style="left:1411.4px;top:774.21px;font-size:10.2px;color:#1e2a33;transform:scaleX(1.0000);transform-origin:center center;">in#15</span>
<svg style="left:1397.9px;top:773.4px;" width="7.4" height="8.6" viewBox="0 0 7.4 8.6"><path d="M0 0 L7.2 4.3 L0 8.6 Z" fill="#8a8a8a"/></svg>
<span class="t" style="left:1411.4px;top:786.71px;font-size:10.2px;color:#1e2a33;transform:scaleX(1.0000);transform-origin:center center;">in#16</span>
<svg style="left:1397.9px;top:785.9px;" width="7.4" height="8.6" viewBox="0 0 7.4 8.6"><path d="M0 0 L7.2 4.3 L0 8.6 Z" fill="#8a8a8a"/></svg>
<div style="left:1404.8px;top:816px;width:123px;height:135.2px;background:#b5cbe1;border-radius:7px;box-shadow:0 0 0 1.2px #0d0d0d,0 1px 2px 1px rgba(0,0,0,.6);overflow:hidden;"><div style="left:0;top:0;width:100%;height:21.6px;background:linear-gradient(#d0e0f0,#adc6e0)"></div><div style="left:0;top:21.7px;width:100%;height:1.7px;background:#1c2c38"></div></div>
<span class="t" style="left:1434.45px;top:822.03px;font-size:13.33px;color:#17202b;transform:scaleX(0.9320);transform-origin:center center;font-weight:bold;">Dante Out</span>
<span class="t" style="left:1411.4px;top:849.21px;font-size:10.2px;color:#1e2a33;transform:scaleX(1.0000);transform-origin:center center;">in#17</span>
<svg style="left:1397.9px;top:848.4px;" width="7.4" height="8.6" viewBox="0 0 7.4 8.6"><path d="M0 0 L7.2 4.3 L0 8.6 Z" fill="#8a8a8a"/></svg>
<span class="t" style="left:1411.4px;top:861.71px;font-size:10.2px;color:#1e2a33;transform:scaleX(1.0000);transform-origin:center center;">in#18</span>
<svg style="left:1397.9px;top:860.9px;" width="7.4" height="8.6" viewBox="0 0 7.4 8.6"><path d="M0 0 L7.2 4.3 L0 8.6 Z" fill="#8a8a8a"/></svg>
<span class="t" style="left:1411.4px;top:874.21px;font-size:10.2px;color:#1e2a33;transform:scaleX(1.0000);transform-origin:center center;">in#19</span>
<svg style="left:1397.9px;top:873.4px;" width="7.4" height="8.6" viewBox="0 0 7.4 8.6"><path d="M0 0 L7.2 4.3 L0 8.6 Z" fill="#8a8a8a"/></svg>
<span class="t" style="left:1411.4px;top:886.71px;font-size:10.2px;color:#1e2a33;transform:scaleX(1.0000);transform-origin:center center;">in#20</span>
<svg style="left:1397.9px;top:885.9px;" width="7.4" height="8.6" viewBox="0 0 7.4 8.6"><path d="M0 0 L7.2 4.3 L0 8.6 Z" fill="#8a8a8a"/></svg>
<span class="t" style="left:1411.4px;top:899.21px;font-size:10.2px;color:#1e2a33;transform:scaleX(1.0000);transform-origin:center center;">in#21</span>
<svg style="left:1397.9px;top:898.4px;" width="7.4" height="8.6" viewBox="0 0 7.4 8.6"><path d="M0 0 L7.2 4.3 L0 8.6 Z" fill="#8a8a8a"/></svg>
<span class="t" style="left:1411.4px;top:911.71px;font-size:10.2px;color:#1e2a33;transform:scaleX(1.0000);transform-origin:center center;">in#22</span>
<svg style="left:1397.9px;top:910.9px;" width="7.4" height="8.6" viewBox="0 0 7.4 8.6"><path d="M0 0 L7.2 4.3 L0 8.6 Z" fill="#8a8a8a"/></svg>
<span class="t" style="left:1411.4px;top:924.21px;font-size:10.2px;color:#1e2a33;transform:scaleX(1.0000);transform-origin:center center;">in#23</span>
<svg style="left:1397.9px;top:923.4px;" width="7.4" height="8.6" viewBox="0 0 7.4 8.6"><path d="M0 0 L7.2 4.3 L0 8.6 Z" fill="#8a8a8a"/></svg>
<span class="t" style="left:1411.4px;top:936.71px;font-size:10.2px;color:#1e2a33;transform:scaleX(1.0000);transform-origin:center center;">in#24</span>
<svg style="left:1397.9px;top:935.9px;" width="7.4" height="8.6" viewBox="0 0 7.4 8.6"><path d="M0 0 L7.2 4.3 L0 8.6 Z" fill="#8a8a8a"/></svg>
<div style="left:403.7px;top:166px;width:125.5px;height:22.7px;background:linear-gradient(#f6bbde,#f0a2d2 45%,#ef9fd0);border-radius:4.5px;box-shadow:0 0 0 1.2px #0d0d0d,0 1px 2px 1px rgba(0,0,0,.55);"></div>
<span class="t" style="left:410.1px;top:175.01px;font-size:10.2px;color:#3a1d30;transform:scaleX(1.0000);transform-origin:left center;">in#1</span>
<span class="t" style="left:496.47px;top:175.01px;font-size:10.2px;color:#3a1d30;transform:scaleX(1.0000);transform-origin:right center;">out#1</span>
<span class="t" style="left:435.8px;top:171.53px;font-size:13.33px;color:#3a1d30;transform:scaleX(0.8814);transform-origin:left center;">High-Pass</span>
<svg style="left:396.8px;top:173.3px;" width="7.4" height="8.6" viewBox="0 0 7.4 8.6"><path d="M0 0 L7.2 4.3 L0 8.6 Z" fill="#8a8a8a"/></svg>
<svg style="left:529.7px;top:173.3px;" width="7.4" height="8.6" viewBox="0 0 7.4 8.6"><path d="M0 0 L7.2 4.3 L0 8.6 Z" fill="#8a8a8a"/></svg>
<div style="left:403.7px;top:191px;width:125.5px;height:22.7px;background:linear-gradient(#f6bbde,#f0a2d2 45%,#ef9fd0);border-radius:4.5px;box-shadow:0 0 0 1.2px #0d0d0d,0 1px 2px 1px rgba(0,0,0,.55);"></div>
<span class="t" style="left:410.1px;top:200.01px;font-size:10.2px;color:#3a1d30;transform:scaleX(1.0000);transform-origin:left center;">in#1</span>
<span class="t" style="left:496.47px;top:200.01px;font-size:10.2px;color:#3a1d30;transform:scaleX(1.0000);transform-origin:right center;">out#1</span>
<span class="t" style="left:435.8px;top:196.53px;font-size:13.33px;color:#3a1d30;transform:scaleX(0.8814);transform-origin:left center;">High-Pass</span>
<svg style="left:396.8px;top:198.3px;" width="7.4" height="8.6" viewBox="0 0 7.4 8.6"><path d="M0 0 L7.2 4.3 L0 8.6 Z" fill="#8a8a8a"/></svg>
<svg style="left:529.7px;top:198.3px;" width="7.4" height="8.6" viewBox="0 0 7.4 8.6"><path d="M0 0 L7.2 4.3 L0 8.6 Z" fill="#8a8a8a"/></svg>
<div style="left:403.7px;top:216px;width:125.5px;height:22.7px;background:linear-gradient(#f6bbde,#f0a2d2 45%,#ef9fd0);border-radius:4.5px;box-shadow:0 0 0 1.2px #0d0d0d,0 1px 2px 1px rgba(0,0,0,.55);"></div>
<span class="t" style="left:410.1px;top:225.01px;font-size:10.2px;color:#3a1d30;transform:scaleX(1.0000);transform-origin:left center;">in#1</span>
<span class="t" style="left:496.47px;top:225.01px;font-size:10.2px;color:#3a1d30;transform:scaleX(1.0000);transform-origin:right center;">out#1</span>
<span class="t" style="left:435.8px;top:221.53px;font-size:13.33px;color:#3a1d30;transform:scaleX(0.8814);transform-origin:left center;">High-Pass</span>
<svg style="left:396.8px;top:223.3px;" width="7.4" height="8.6" viewBox="0 0 7.4 8.6"><path d="M0 0 L7.2 4.3 L0 8.6 Z" fill="#8a8a8a"/></svg>
<svg style="left:529.7px;top:223.3px;" width="7.4" height="8.6" viewBox="0 0 7.4 8.6"><path d="M0 0 L7.2 4.3 L0 8.6 Z" fill="#8a8a8a"/></svg>
<div style="left:403.7px;top:241px;width:125.5px;height:22.7px;background:linear-gradient(#f6bbde,#f0a2d2 45%,#ef9fd0);border-radius:4.5px;box-shadow:0 0 0 1.2px #0d0d0d,0 1px 2px 1px rgba(0,0,0,.55);"></div>
<span class="t" style="left:410.1px;top:250.01px;font-size:10.2px;color:#3a1d30;transform:scaleX(1.0000);transform-origin:left center;">in#1</span>
<span class="t" style="left:496.47px;top:250.01px;font-size:10.2px;color:#3a1d30;transform:scaleX(1.0000);transform-origin:right center;">out#1</span>
<span class="t" style="left:435.8px;top:246.53px;font-size:13.33px;color:#3a1d30;transform:scaleX(0.8814);transform-origin:left center;">High-Pass</span>
<svg style="left:396.8px;top:248.3px;" width="7.4" height="8.6" viewBox="0 0 7.4 8.6"><path d="M0 0 L7.2 4.3 L0 8.6 Z" fill="#8a8a8a"/></svg>
<svg style="left:529.7px;top:248.3px;" width="7.4" height="8.6" viewBox="0 0 7.4 8.6"><path d="M0 0 L7.2 4.3 L0 8.6 Z" fill="#8a8a8a"/></svg>
<div style="left:553.8px;top:166px;width:122.7px;height:22.7px;background:linear-gradient(#f6bbde,#f0a2d2 45%,#ef9fd0);border-radius:4.5px;box-shadow:0 0 0 1.2px #0d0d0d,0 1px 2px 1px rgba(0,0,0,.55);"></div>
<span class="t" style="left:560.2px;top:175.01px;font-size:10.2px;color:#3a1d30;transform:scaleX(1.0000);transform-origin:left center;">in#1</span>
<span class="t" style="left:643.77px;top:175.01px;font-size:10.2px;color:#3a1d30;transform:scaleX(1.0000);transform-origin:right center;">out#1</span>
<span class="t" style="left:600.5px;top:171.53px;font-size:13.33px;color:#3a1d30;transform:scaleX(0.8170);transform-origin:left center;">PEQ</span>
<svg style="left:546.9px;top:173.3px;" width="7.4" height="8.6" viewBox="0 0 7.4 8.6"><path d="M0 0 L7.2 4.3 L0 8.6 Z" fill="#8a8a8a"/></svg>
<svg style="left:677px;top:173.3px;" width="7.4" height="8.6" viewBox="0 0 7.4 8.6"><path d="M0 0 L7.2 4.3 L0 8.6 Z" fill="#8a8a8a"/></svg>
<div style="left:553.8px;top:191px;width:122.7px;height:22.7px;background:linear-gradient(#f6bbde,#f0a2d2 45%,#ef9fd0);border-radius:4.5px;box-shadow:0 0 0 1.2px #0d0d0d,0 1px 2px 1px rgba(0,0,0,.55);"></div>
<span class="t" style="left:560.2px;top:200.01px;font-size:10.2px;color:#3a1d30;transform:scaleX(1.0000);transform-origin:left center;">in#1</span>
<span class="t" style="left:643.77px;top:200.01px;font-size:10.2px;color:#3a1d30;transform:scaleX(1.0000);transform-origin:right center;">out#1</span>
<span class="t" style="left:600.5px;top:196.53px;font-size:13.33px;color:#3a1d30;transform:scaleX(0.8170);transform-origin:left center;">PEQ</span>
<svg style="left:546.9px;top:198.3px;" width="7.4" height="8.6" viewBox="0 0 7.4 8.6"><path d="M0 0 L7.2 4.3 L0 8.6 Z" fill="#8a8a8a"/></svg>
<svg style="left:677px;top:198.3px;" width="7.4" height="8.6" viewBox="0 0 7.4 8.6"><path d="M0 0 L7.2 4.3 L0 8.6 Z" fill="#8a8a8a"/></svg>
<div style="left:553.8px;top:216px;width:125.6px;height:22.7px;background:linear-gradient(#f6bbde,#f0a2d2 45%,#ef9fd0);border-radius:4.5px;box-shadow:0 0 0 1.2px #0d0d0d,0 1px 2px 1px rgba(0,0,0,.55);"></div>
<span class="t" style="left:560.2px;top:225.01px;font-size:10.2px;color:#3a1d30;transform:scaleX(1.0000);transform-origin:left center;">in#1</span>
<span class="t" style="left:646.67px;top:225.01px;font-size:10.2px;color:#3a1d30;transform:scaleX(1.0000);transform-origin:right center;">out#1</span>
<span class="t" style="left:586.2px;top:221.53px;font-size:13.33px;color:#3a1d30;transform:scaleX(0.8749);transform-origin:left center;">High-Pass</span>
<svg style="left:546.9px;top:223.3px;" width="7.4" height="8.6" viewBox="0 0 7.4 8.6"><path d="M0 0 L7.2 4.3 L0 8.6 Z" fill="#8a8a8a"/></svg>
<svg style="left:679.9px;top:223.3px;" width="7.4" height="8.6" viewBox="0 0 7.4 8.6"><path d="M0 0 L7.2 4.3 L0 8.6 Z" fill="#8a8a8a"/></svg>
<div style="left:553.8px;top:241px;width:122.7px;height:22.7px;background:linear-gradient(#f6bbde,#f0a2d2 45%,#ef9fd0);border-radius:4.5px;box-shadow:0 0 0 1.2px #0d0d0d,0 1px 2px 1px rgba(0,0,0,.55);"></div>
<span class="t" style="left:560.2px;top:250.01px;font-size:10.2px;color:#3a1d30;transform:scaleX(1.0000);transform-origin:left center;">in#1</span>
<span class="t" style="left:643.77px;top:250.01px;font-size:10.2px;color:#3a1d30;transform:scaleX(1.0000);transform-origin:right center;">out#1</span>
<span class="t" style="left:600.5px;top:246.53px;font-size:13.33px;color:#3a1d30;transform:scaleX(0.8170);transform-origin:left center;">PEQ</span>
<svg style="left:546.9px;top:248.3px;" width="7.4" height="8.6" viewBox="0 0 7.4 8.6"><path d="M0 0 L7.2 4.3 L0 8.6 Z" fill="#8a8a8a"/></svg>
<svg style="left:677px;top:248.3px;" width="7.4" height="8.6" viewBox="0 0 7.4 8.6"><path d="M0 0 L7.2 4.3 L0 8.6 Z" fill="#8a8a8a"/></svg>
<div style="left:1103.7px;top:166px;width:122.9px;height:22.7px;background:linear-gradient(#f6bbde,#f0a2d2 45%,#ef9fd0);border-radius:4.5px;box-shadow:0 0 0 1.2px #0d0d0d,0 1px 2px 1px rgba(0,0,0,.55);"></div>
<span class="t" style="left:1110.1px;top:175.01px;font-size:10.2px;color:#3a1d30;transform:scaleX(1.0000);transform-origin:left center;">in#1</span>
<span class="t" style="left:1193.87px;top:175.01px;font-size:10.2px;color:#3a1d30;transform:scaleX(1.0000);transform-origin:right center;">out#1</span>
<span class="t" style="left:1150.4px;top:171.53px;font-size:13.33px;color:#3a1d30;transform:scaleX(0.8170);transform-origin:left center;">PEQ</span>
<svg style="left:1096.8px;top:173.3px;" width="7.4" height="8.6" viewBox="0 0 7.4 8.6"><path d="M0 0 L7.2 4.3 L0 8.6 Z" fill="#8a8a8a"/></svg>
<svg style="left:1227.1px;top:173.3px;" width="7.4" height="8.6" viewBox="0 0 7.4 8.6"><path d="M0 0 L7.2 4.3 L0 8.6 Z" fill="#8a8a8a"/></svg>
<div style="left:1253.6px;top:166px;width:122.7px;height:22.7px;background:linear-gradient(#5fb0f4,#3f94e6 45%,#3a8fe3);border-radius:4.5px;box-shadow:0 0 0 1.2px #0d0d0d,0 1px 2px 1px rgba(0,0,0,.55);"></div>
<span class="t" style="left:1260px;top:175.01px;font-size:10.2px;color:#0d2138;transform:scaleX(1.0000);transform-origin:left center;">in#1</span>
<span class="t" style="left:1343.57px;top:175.01px;font-size:10.2px;color:#0d2138;transform:scaleX(1.0000);transform-origin:right center;">out#1</span>
<span class="t" style="left:1293px;top:171.53px;font-size:13.33px;color:#0d2138;transform:scaleX(0.9325);transform-origin:left center;">Limiter</span>
<svg style="left:1246.7px;top:173.3px;" width="7.4" height="8.6" viewBox="0 0 7.4 8.6"><path d="M0 0 L7.2 4.3 L0 8.6 Z" fill="#8a8a8a"/></svg>
<svg style="left:1376.8px;top:173.3px;" width="7.4" height="8.6" viewBox="0 0 7.4 8.6"><path d="M0 0 L7.2 4.3 L0 8.6 Z" fill="#8a8a8a"/></svg>
<div style="left:1103.7px;top:191px;width:122.9px;height:22.7px;background:linear-gradient(#f6bbde,#f0a2d2 45%,#ef9fd0);border-radius:4.5px;box-shadow:0 0 0 1.2px #0d0d0d,0 1px 2px 1px rgba(0,0,0,.55);"></div>
<span class="t" style="left:1110.1px;top:200.01px;font-size:10.2px;color:#3a1d30;transform:scaleX(1.0000);transform-origin:left center;">in#1</span>
<span class="t" style="left:1193.87px;top:200.01px;font-size:10.2px;color:#3a1d30;transform:scaleX(1.0000);transform-origin:right center;">out#1</span>
<span class="t" style="left:1150.4px;top:196.53px;font-size:13.33px;color:#3a1d30;transform:scaleX(0.8170);transform-origin:left center;">PEQ</span>
<svg style="left:1096.8px;top:198.3px;" width="7.4" height="8.6" viewBox="0 0 7.4 8.6"><path d="M0 0 L7.2 4.3 L0 8.6 Z" fill="#8a8a8a"/></svg>
<svg style="left:1227.1px;top:198.3px;" width="7.4" height="8.6" viewBox="0 0 7.4 8.6"><path d="M0 0 L7.2 4.3 L0 8.6 Z" fill="#8a8a8a"/></svg>
<div style="left:1253.6px;top:191px;width:122.7px;height:22.7px;background:linear-gradient(#5fb0f4,#3f94e6 45%,#3a8fe3);border-radius:4.5px;box-shadow:0 0 0 1.2px #0d0d0d,0 1px 2px 1px rgba(0,0,0,.55);"></div>
<span class="t" style="left:1260px;top:200.01px;font-size:10.2px;color:#0d2138;transform:scaleX(1.0000);transform-origin:left center;">in#1</span>
<span class="t" style="left:1343.57px;top:200.01px;font-size:10.2px;color:#0d2138;transform:scaleX(1.0000);transform-origin:right center;">out#1</span>
<span class="t" style="left:1293px;top:196.53px;font-size:13.33px;color:#0d2138;transform:scaleX(0.9325);transform-origin:left center;">Limiter</span>
<svg style="left:1246.7px;top:198.3px;" width="7.4" height="8.6" viewBox="0 0 7.4 8.6"><path d="M0 0 L7.2 4.3 L0 8.6 Z" fill="#8a8a8a"/></svg>
<svg style="left:1376.8px;top:198.3px;" width="7.4" height="8.6" viewBox="0 0 7.4 8.6"><path d="M0 0 L7.2 4.3 L0 8.6 Z" fill="#8a8a8a"/></svg>
<div style="left:1103.7px;top:216px;width:122.9px;height:22.7px;background:linear-gradient(#f6bbde,#f0a2d2 45%,#ef9fd0);border-radius:4.5px;box-shadow:0 0 0 1.2px #0d0d0d,0 1px 2px 1px rgba(0,0,0,.55);"></div>
<span class="t" style="left:1110.1px;top:225.01px;font-size:10.2px;color:#3a1d30;transform:scaleX(1.0000);transform-origin:left center;">in#1</span>
<span class="t" style="left:1193.87px;top:225.01px;font-size:10.2px;color:#3a1d30;transform:scaleX(1.0000);transform-origin:right center;">out#1</span>
<span class="t" style="left:1150.4px;top:221.53px;font-size:13.33px;color:#3a1d30;transform:scaleX(0.8170);transform-origin:left center;">PEQ</span>
<svg style="left:1096.8px;top:223.3px;" width="7.4" height="8.6" viewBox="0 0 7.4 8.6"><path d="M0 0 L7.2 4.3 L0 8.6 Z" fill="#8a8a8a"/></svg>
<svg style="left:1227.1px;top:223.3px;" width="7.4" height="8.6" viewBox="0 0 7.4 8.6"><path d="M0 0 L7.2 4.3 L0 8.6 Z" fill="#8a8a8a"/></svg>
<div style="left:1253.6px;top:216px;width:122.7px;height:22.7px;background:linear-gradient(#5fb0f4,#3f94e6 45%,#3a8fe3);border-radius:4.5px;box-shadow:0 0 0 1.2px #0d0d0d,0 1px 2px 1px rgba(0,0,0,.55);"></div>
<span class="t" style="left:1260px;top:225.01px;font-size:10.2px;color:#0d2138;transform:scaleX(1.0000);transform-origin:left center;">in#1</span>
<span class="t" style="left:1343.57px;top:225.01px;font-size:10.2px;color:#0d2138;transform:scaleX(1.0000);transform-origin:right center;">out#1</span>
<span class="t" style="left:1293px;top:221.53px;font-size:13.33px;color:#0d2138;transform:scaleX(0.9325);transform-origin:left center;">Limiter</span>
<svg style="left:1246.7px;top:223.3px;" width="7.4" height="8.6" viewBox="0 0 7.4 8.6"><path d="M0 0 L7.2 4.3 L0 8.6 Z" fill="#8a8a8a"/></svg>
<svg style="left:1376.8px;top:223.3px;" width="7.4" height="8.6" viewBox="0 0 7.4 8.6"><path d="M0 0 L7.2 4.3 L0 8.6 Z" fill="#8a8a8a"/></svg>
<div style="left:1103.7px;top:241px;width:122.9px;height:22.7px;background:linear-gradient(#f6bbde,#f0a2d2 45%,#ef9fd0);border-radius:4.5px;box-shadow:0 0 0 1.2px #0d0d0d,0 1px 2px 1px rgba(0,0,0,.55);"></div>
<span class="t" style="left:1110.1px;top:250.01px;font-size:10.2px;color:#3a1d30;transform:scaleX(1.0000);transform-origin:left center;">in#1</span>
<span class="t" style="left:1193.87px;top:250.01px;font-size:10.2px;color:#3a1d30;transform:scaleX(1.0000);transform-origin:right center;">out#1</span>
<span class="t" style="left:1150.4px;top:246.53px;font-size:13.33px;color:#3a1d30;transform:scaleX(0.8170);transform-origin:left center;">PEQ</span>
<svg style="left:1096.8px;top:248.3px;" width="7.4" height="8.6" viewBox="0 0 7.4 8.6"><path d="M0 0 L7.2 4.3 L0 8.6 Z" fill="#8a8a8a"/></svg>
<svg style="left:1227.1px;top:248.3px;" width="7.4" height="8.6" viewBox="0 0 7.4 8.6"><path d="M0 0 L7.2 4.3 L0 8.6 Z" fill="#8a8a8a"/></svg>
<div style="left:1253.6px;top:241px;width:122.7px;height:22.7px;background:linear-gradient(#5fb0f4,#3f94e6 45%,#3a8fe3);border-radius:4.5px;box-shadow:0 0 0 1.2px #0d0d0d,0 1px 2px 1px rgba(0,0,0,.55);"></div>
<span class="t" style="left:1260px;top:250.01px;font-size:10.2px;color:#0d2138;transform:scaleX(1.0000);transform-origin:left center;">in#1</span>
<span class="t" style="left:1343.57px;top:250.01px;font-size:10.2px;color:#0d2138;transform:scaleX(1.0000);transform-origin:right center;">out#1</span>
<span class="t" style="left:1293px;top:246.53px;font-size:13.33px;color:#0d2138;transform:scaleX(0.9325);transform-origin:left center;">Limiter</span>
<svg style="left:1246.7px;top:248.3px;" width="7.4" height="8.6" viewBox="0 0 7.4 8.6"><path d="M0 0 L7.2 4.3 L0 8.6 Z" fill="#8a8a8a"/></svg>
<svg style="left:1376.8px;top:248.3px;" width="7.4" height="8.6" viewBox="0 0 7.4 8.6"><path d="M0 0 L7.2 4.3 L0 8.6 Z" fill="#8a8a8a"/></svg>
<div style="left:765.7px;top:265.8px;width:213.6px;height:73.6px;background:linear-gradient(#b5e18a,#9dd768 14%,#9bd666);border-radius:6px;box-shadow:0 0 0 1.4px #e0201c;"></div>
<span class="t" style="left:772.6px;top:274.51px;font-size:10.2px;color:#26361a;transform:scaleX(1.0000);transform-origin:left center;">in#1</span>
<span class="t" style="left:942.87px;top:274.51px;font-size:10.2px;color:#26361a;transform:scaleX(1.0000);transform-origin:right center;">out#1</span>
<svg style="left:758.8px;top:273.3px;" width="7.4" height="8.6" viewBox="0 0 7.4 8.6"><path d="M0 0 L7.2 4.3 L0 8.6 Z" fill="#8a8a8a"/></svg>
<svg style="left:979.8px;top:273.3px;" width="7.4" height="8.6" viewBox="0 0 7.4 8.6"><path d="M0 0 L7.2 4.3 L0 8.6 Z" fill="#8a8a8a"/></svg>
<span class="t" style="left:772.6px;top:287.01px;font-size:10.2px;color:#26361a;transform:scaleX(1.0000);transform-origin:left center;">in#2</span>
<span class="t" style="left:942.87px;top:287.01px;font-size:10.2px;color:#26361a;transform:scaleX(1.0000);transform-origin:right center;">out#2</span>
<svg style="left:758.8px;top:285.8px;" width="7.4" height="8.6" viewBox="0 0 7.4 8.6"><path d="M0 0 L7.2 4.3 L0 8.6 Z" fill="#8a8a8a"/></svg>
<svg style="left:979.8px;top:285.8px;" width="7.4" height="8.6" viewBox="0 0 7.4 8.6"><path d="M0 0 L7.2 4.3 L0 8.6 Z" fill="#8a8a8a"/></svg>
<span class="t" style="left:772.6px;top:299.51px;font-size:10.2px;color:#26361a;transform:scaleX(1.0000);transform-origin:left center;">in#3</span>
<span class="t" style="left:942.87px;top:299.51px;font-size:10.2px;color:#26361a;transform:scaleX(1.0000);transform-origin:right center;">out#3</span>
<svg style="left:758.8px;top:298.3px;" width="7.4" height="8.6" viewBox="0 0 7.4 8.6"><path d="M0 0 L7.2 4.3 L0 8.6 Z" fill="#8a8a8a"/></svg>
<svg style="left:979.8px;top:298.3px;" width="7.4" height="8.6" viewBox="0 0 7.4 8.6"><path d="M0 0 L7.2 4.3 L0 8.6 Z" fill="#8a8a8a"/></svg>
<span class="t" style="left:772.6px;top:312.01px;font-size:10.2px;color:#26361a;transform:scaleX(1.0000);transform-origin:left center;">in#4</span>
<span class="t" style="left:942.87px;top:312.01px;font-size:10.2px;color:#26361a;transform:scaleX(1.0000);transform-origin:right center;">out#4</span>
<svg style="left:758.8px;top:310.8px;" width="7.4" height="8.6" viewBox="0 0 7.4 8.6"><path d="M0 0 L7.2 4.3 L0 8.6 Z" fill="#8a8a8a"/></svg>
<svg style="left:979.8px;top:310.8px;" width="7.4" height="8.6" viewBox="0 0 7.4 8.6"><path d="M0 0 L7.2 4.3 L0 8.6 Z" fill="#8a8a8a"/></svg>
<span class="t" style="left:939.52px;top:324.81px;font-size:10.2px;color:#26361a;transform:scaleX(0.9916);transform-origin:right center;">mix out</span>
<svg style="left:979.8px;top:323.3px;" width="7.4" height="8.6" viewBox="0 0 7.4 8.6"><path d="M0 0 L7.2 4.3 L0 8.6 Z" fill="#8a8a8a"/></svg>
<span class="t" style="left:798.5px;top:297.13px;font-size:13.33px;color:#26361a;transform:scaleX(0.9309);transform-origin:left center;">Gain Sharing Auto Mixer</span>
<svg style="left:0px;top:0px;pointer-events:none;" width="1920" height="1019" viewBox="0 0 1920 1019"><path d="M381 177.6 H396.5 M381 190 H387.5 C395.5 190 392.5 202.5 402 202.5 M381 202.5 H391.3 Q396.3 202.5 396.3 207.5 V222.6 Q396.3 227.6 401.3 227.6 H402 M381 215 H391.3 Q396.3 215 396.3 220 V247.6 Q396.3 252.6 401.3 252.6 H402 M536.5 177.6 H546.5 M1234 177.6 H1246.5 M536.5 202.6 H546.5 M1234 202.6 H1246.5 M536.5 227.6 H546.5 M1234 227.6 H1246.5 M536.5 252.6 H546.5 M1234 252.6 H1246.5 M684 177.6 H709.2 Q715.2 177.6 715.2 183.6 V271.6 Q715.2 277.6 721.2 277.6 H758.5 M684 202.6 H709.2 Q715.2 202.6 715.2 208.6 V284.1 Q715.2 290.1 721.2 290.1 H758.5 M687 227.6 H712.8 Q718.8 227.6 718.8 233.6 V296.6 Q718.8 302.6 724.8 302.6 H758.5 M684 252.6 H709.2 Q715.2 252.6 715.2 258.6 V309.1 Q715.2 315.1 721.2 315.1 H758.5 M986.5 277.6 H1010.4 Q1016.4 277.6 1016.4 271.6 V183.6 Q1016.4 177.6 1022.4 177.6 H1096.5 M986.5 290.1 H1010.4 Q1016.4 290.1 1016.4 284.1 V208.6 Q1016.4 202.6 1022.4 202.6 H1096.5 M986.5 302.6 H1010.4 Q1016.4 302.6 1016.4 296.6 V233.6 Q1016.4 227.6 1022.4 227.6 H1096.5 M986.5 315.1 H1010.4 Q1016.4 315.1 1016.4 309.1 V258.6 Q1016.4 252.6 1022.4 252.6 H1096.5 M1384 177.6 H1397.5 M1384 202.5 H1385 C1392.5 202.5 1387 189.9 1397.6 189.9 M1384 227.5 H1384.7 Q1389.7 227.5 1389.7 222.5 V207.4 Q1389.7 202.4 1394.7 202.4 H1397.6 M1384 252.4 H1384.7 Q1389.7 252.4 1389.7 247.4 V219.9 Q1389.7 214.9 1394.7 214.9 H1397.6" fill="none" stroke="#d6d6d6" stroke-width="1.35" stroke-linejoin="round"/></svg>
<div style="left:1551.2px;top:91px;width:16.1px;height:874px;background:#202020;"></div>
<div style="left:1553px;top:110.9px;width:12px;height:241.8px;background:#3a3a3a;border-radius:6px;"></div>
<svg style="left:1554.85px;top:98.8px;" width="8" height="3.7" viewBox="0 0 8 3.7"><path d="M0 3.7 L4 0 L8 3.7 Z" fill="#787878"/></svg>
<svg style="left:1554.85px;top:952.3px;" width="8" height="3.7" viewBox="0 0 8 3.7"><path d="M0 0 L4 3.7 L8 0 Z" fill="#787878"/></svg>
<div style="left:227px;top:965px;width:1324.2px;height:15px;background:#202020;"></div>
<div style="left:248.8px;top:966px;width:235.2px;height:13.3px;background:#3a3a3a;border-radius:6.6px;"></div>
<svg style="left:236px;top:969.1px;" width="4.1" height="7" viewBox="0 0 4.1 7"><path d="M4.1 0 L0 3.5 L4.1 7 Z" fill="#787878"/></svg>
<svg style="left:1538.8px;top:969.1px;" width="4.1" height="7" viewBox="0 0 4.1 7"><path d="M0 0 L4.1 3.5 L0 7 Z" fill="#787878"/></svg>
<div style="left:1551.2px;top:965px;width:16.1px;height:15px;background:#5b5b5b;"></div>
<div style="left:1571.8px;top:61.3px;width:1.8px;height:1.8px;background:#7c7c7c;"></div>
<div style="left:1576.3px;top:61.3px;width:1.8px;height:1.8px;background:#7c7c7c;"></div>
<div style="left:1580.8px;top:61.3px;width:1.8px;height:1.8px;background:#7c7c7c;"></div>
<div style="left:1585.3px;top:61.3px;width:1.8px;height:1.8px;background:#7c7c7c;"></div>
<div style="left:1589.8px;top:61.3px;width:1.8px;height:1.8px;background:#7c7c7c;"></div>
<div style="left:1594.3px;top:61.3px;width:1.8px;height:1.8px;background:#7c7c7c;"></div>
<div style="left:1598.8px;top:61.3px;width:1.8px;height:1.8px;background:#7c7c7c;"></div>
<div style="left:1603.3px;top:61.3px;width:1.8px;height:1.8px;background:#7c7c7c;"></div>
<div style="left:1607.8px;top:61.3px;width:1.8px;height:1.8px;background:#7c7c7c;"></div>
<div style="left:1612.3px;top:61.3px;width:1.8px;height:1.8px;background:#7c7c7c;"></div>
<div style="left:1576px;top:171.3px;width:35px;height:1.4px;background:#777;"></div>
<div style="left:1576px;top:252.6px;width:35px;height:1.4px;background:#777;"></div>
<div style="left:1576px;top:338.7px;width:35px;height:1.4px;background:#777;"></div>
<div style="left:1576px;top:452.7px;width:35px;height:1.4px;background:#777;"></div>
<div style="left:1576px;top:598.7px;width:35px;height:1.4px;background:#777;"></div>
<div style="left:1576px;top:679.9px;width:35px;height:1.4px;background:#777;"></div>
<div style="left:1576px;top:825.9px;width:35px;height:1.4px;background:#777;"></div>
<svg style="left:1581.3px;top:71px;" width="24" height="24" viewBox="0 0 24 24"><path d="M7 3.5 H13.8 L19 8.7 V18.6 Q19 20.5 17.1 20.5 H7 Q5.1 20.5 5.1 18.6 V5.4 Q5.1 3.5 7 3.5 Z" fill="#e9e9e9"/><path d="M13.6 3.6 V7.6 Q13.6 9 15 9 H19" fill="none" stroke="#5b5b5b" stroke-width="1.1"/><path d="M7.6 12.3 H16.4 M7.6 15.9 H14.2" stroke="#5b5b5b" stroke-width="1.9"/></svg>
<svg style="left:1581.3px;top:102.7px;" width="24" height="24" viewBox="0 0 24 24"><path d="M3.6 17.6 V6.9 Q3.6 5.3 5.2 5.3 H9.4 L11.3 7.3 H17 Q18.5 7.3 18.5 8.8 V9.6 H8.2 Q6.9 9.6 6.4 10.8 Z" fill="#e9e9e9"/><path d="M8.3 10.9 H20.2 Q21.3 10.9 20.9 12 L18.7 17.9 Q18.3 18.9 17.2 18.9 H5 Q4.2 18.9 4.5 18.1 L6.9 11.9 Q7.3 10.9 8.3 10.9 Z" fill="#e9e9e9"/></svg>
<svg style="left:1581.3px;top:135.5px;" width="24" height="24" viewBox="0 0 24 24"><path d="M6.9 5.6 H15.3 L18.6 8.9 V17.4 Q18.6 18.5 17.5 18.5 H6.9 Q5.8 18.5 5.8 17.4 V6.7 Q5.8 5.6 6.9 5.6 Z" fill="none" stroke="#e9e9e9" stroke-width="1.7"/><path d="M8.3 5.9 V9.2 H14.2 V5.9" fill="none" stroke="#e9e9e9" stroke-width="1.6"/><circle cx="12.3" cy="14.6" r="2.1" fill="none" stroke="#e9e9e9" stroke-width="1.7"/></svg>
<svg style="left:1581.3px;top:184px;" width="24" height="24" viewBox="0 0 24 24"><path d="M6.3 8.7 H14.3 A4.75 4.75 0 0 1 14.3 18.2 H10.4" fill="none" stroke="#e9e9e9" stroke-width="1.8"/><path d="M11.3 4.6 L6.6 8.7 L11.3 12.9" fill="none" stroke="#e9e9e9" stroke-width="1.8"/><rect x="6.9" y="17.2" width="2.2" height="2.1" fill="#e9e9e9"/></svg>
<svg style="left:1581.3px;top:217px;" width="24" height="24" viewBox="0 0 24 24"><path d="M18.2 8.5 H10.9 A4.7 4.7 0 0 0 10.9 17.9 H13.6" fill="none" stroke="#a2a2a2" stroke-width="1.8"/><path d="M13.1 4.3 L17.9 8.5 L13.1 12.8" fill="none" stroke="#a2a2a2" stroke-width="1.8"/><rect x="14.8" y="16.9" width="2.2" height="2.1" fill="#a2a2a2"/></svg>
<svg style="left:1581.3px;top:267.6px;" width="24" height="24" viewBox="0 0 24 24"><path d="M2.4 1.4 H21.8 V6.4 H2.4 Z" fill="#e9e9e9"/><rect x="14.7" y="3.3" width="2" height="2" fill="#5b5b5b"/><rect x="17.8" y="3.3" width="2" height="2" fill="#5b5b5b"/><path d="M3.85 11.2 V20.4 M14.6 12 H19.55 V20.4" fill="none" stroke="#e9e9e9" stroke-width="1.7"/><path d="M0.7 20.1 H22.7 V21.6 Q22.7 22.4 21.6 22.4 H1.8 Q0.7 22.4 0.7 21.6 Z" fill="#e9e9e9"/><path d="M9.6 21 H13.4" stroke="#5b5b5b" stroke-width="0.9"/><path d="M9.8 4.4 L16.2 10.6 H13.1 V18 H6.7 V10.6 H3.4 Z" fill="#5b5b5b"/><path d="M9.8 6.6 L14.2 10.2 H12.1 V17.1 H7.6 V10.2 H5.4 Z" fill="#4bf558"/></svg>
<svg style="left:1581.3px;top:303.1px;" width="24" height="24" viewBox="0 0 24 24"><path d="M4.05 4 L5.17 4.9 L6.29 4 L7.4 4.9 L8.52 4 L9.64 4.9 L10.76 4 L11.88 4.9 L12.99 4 L14.11 4.9 L15.23 4 L16.35 4.9 L17.47 4 L18.58 4.9 L19.7 4 V20 L18.58 19.1 L17.46 20 L16.35 19.1 L15.23 20 L14.11 19.1 L12.99 20 L11.87 19.1 L10.76 20 L9.64 19.1 L8.52 20 L7.4 19.1 L6.28 20 L5.17 19.1 L4.05 20 Z" fill="#e9e9e9"/><path d="M6.7 8.75 H16.8 M6.7 12.05 H16.8 M6.7 15.35 H16.8" stroke="#5b5b5b" stroke-width="1.5"/></svg>
<svg style="left:1581.3px;top:350.6px;" width="24" height="24" viewBox="0 0 24 24"><path d="M2.5 11.9 Q6.6 5.4 11.8 5.4 Q17 5.4 21.1 11.9 Q17 18.4 11.8 18.4 Q6.6 18.4 2.5 11.9 Z" fill="#e9e9e9"/><circle cx="11.8" cy="11.8" r="4.1" fill="#5b5b5b"/><circle cx="11.8" cy="11.8" r="2.4" fill="#e9e9e9"/></svg>
<svg style="left:1581.3px;top:380.6px;" width="24" height="24" viewBox="0 0 24 24"><circle cx="6.7" cy="12" r="1.75" fill="#e9e9e9"/><circle cx="11.8" cy="12" r="1.75" fill="#e9e9e9"/><circle cx="16.9" cy="12" r="1.75" fill="#e9e9e9"/></svg>
<svg style="left:1581.3px;top:414.3px;" width="24" height="24" viewBox="0 0 24 24"><path d="M4.4 19.1 L14.3 9.9" stroke="#e9e9e9" stroke-width="4.3"/><path d="M11.9 12.1 L13.6 10.55" stroke="#5b5b5b" stroke-width="1.7"/><path d="M9.9 11.1 L12.7 14.1" stroke="#5b5b5b" stroke-width="0.9"/><path d="M6.5 4.1 L9.7 7.3 M9.7 4.1 L6.5 7.3 M16.6 4.1 L19.8 7.3 M19.8 4.1 L16.6 7.3 M16.6 14.1 L19.8 17.3 M19.8 14.1 L16.6 17.3" stroke="#e9e9e9" stroke-width="1.2"/></svg>
<svg style="left:1581.3px;top:465.7px;" width="24" height="24" viewBox="0 0 24 24"><path d="M4.4 3.7 V20.3" stroke="#e9e9e9" stroke-width="1.5"/><rect x="7" y="6.2" width="8.4" height="4.9" fill="#e9e9e9"/><rect x="7" y="12.7" width="13.8" height="5.2" fill="#e9e9e9"/></svg>
<svg style="left:1581.3px;top:498px;" width="24" height="24" viewBox="0 0 24 24"><path d="M20.3 3.7 V20.3" stroke="#e9e9e9" stroke-width="1.5"/><rect x="9" y="6.2" width="8.6" height="4.9" fill="#e9e9e9"/><rect x="3.6" y="12.7" width="14.1" height="5.2" fill="#e9e9e9"/></svg>
<svg style="left:1581.3px;top:530.8px;" width="24" height="24" viewBox="0 0 24 24"><path d="M3.7 4.2 H20.7" stroke="#e9e9e9" stroke-width="1.5"/><rect x="6.3" y="6.9" width="5.2" height="13.6" fill="#e9e9e9"/><rect x="13.1" y="6.9" width="4.9" height="8.4" fill="#e9e9e9"/></svg>
<svg style="left:1581.3px;top:563px;" width="24" height="24" viewBox="0 0 24 24"><path d="M3.7 19.8 H20.7" stroke="#e9e9e9" stroke-width="1.5"/><rect x="6.3" y="3.7" width="5.2" height="13.6" fill="#e9e9e9"/><rect x="13.1" y="8.9" width="4.9" height="8.4" fill="#e9e9e9"/></svg>
<svg style="left:1581.3px;top:611.8px;" width="24" height="24" viewBox="0 0 24 24"><path d="M5.3 12 H19.3" stroke="#e9e9e9" stroke-width="1.5"/><path d="M12.3 2.8 V7.2 M12.3 21.2 V16.8" stroke="#e9e9e9" stroke-width="1.4"/><path d="M9.4 5.7 H15.2 L12.3 9.2 Z M9.4 18.3 H15.2 L12.3 14.8 Z" fill="#e9e9e9"/></svg>
<svg style="left:1581.3px;top:644.2px;" width="24" height="24" viewBox="0 0 24 24"><path d="M12.3 4.9 V19.1" stroke="#e9e9e9" stroke-width="1.5"/><path d="M2.6 12 H7.4 M22 12 H17.2" stroke="#e9e9e9" stroke-width="1.4"/><path d="M6 9.1 V14.9 L9.6 12 Z M18.6 9.1 V14.9 L15 12 Z" fill="#e9e9e9"/></svg>
<svg style="left:1581.3px;top:693.3px;" width="24" height="24" viewBox="0 0 24 24"><path d="M4.4 10.8 V4.5 H10.9 V6.9 M19.5 12.4 V19.1 H13 V16.7" fill="none" stroke="#e9e9e9" stroke-width="1.9"/><rect x="8.8" y="8.7" width="6" height="5.9" fill="#e9e9e9"/></svg>
<svg style="left:1581.3px;top:725.6px;" width="24" height="24" viewBox="0 0 24 24"><rect x="4.5" y="4.5" width="5.6" height="5.6" fill="none" stroke="#e9e9e9" stroke-width="1.5"/><rect x="14.3" y="13.9" width="5.6" height="5.6" fill="none" stroke="#e9e9e9" stroke-width="1.5"/><rect x="13.4" y="8.6" width="1.9" height="1.9" fill="#e9e9e9"/><rect x="9.2" y="12.8" width="1.9" height="1.9" fill="#e9e9e9"/></svg>
<svg style="left:1581.3px;top:758px;" width="24" height="24" viewBox="0 0 24 24"><rect x="3.8" y="3.8" width="11.6" height="11.6" fill="#e9e9e9"/><path d="M17.6 9 H20.1 V20.1 H9 V17.6" fill="none" stroke="#e9e9e9" stroke-width="1.5"/></svg>
<svg style="left:1581.3px;top:790.4px;" width="24" height="24" viewBox="0 0 24 24"><path d="M17.2 8.2 H20.8 V20.8 H8.2 V17.2 H17.2 Z" fill="#e9e9e9"/><rect x="4.5" y="4.5" width="10.6" height="10.6" fill="none" stroke="#e9e9e9" stroke-width="1.5"/></svg>
<span class="t" style="left:1585.3px;top:850.6px;font-family:'Liberation Serif',serif;font-size:20px;color:#e9e9e9;width:16px;text-align:center;-webkit-text-stroke:0.35px #e9e9e9;">T</span>
<div style="left:1627.5px;top:94.85px;width:285.6px;height:1.4px;background:#3a3a3a;"></div>
<div style="left:1627.5px;top:126.75px;width:285.6px;height:1.4px;background:#3a3a3a;"></div>
<div style="left:1627.5px;top:158.85px;width:285.6px;height:1.4px;background:#3a3a3a;"></div>
<div style="left:1627.5px;top:181.85px;width:285.6px;height:1.4px;background:#3a3a3a;"></div>
<div style="left:1627.5px;top:212.75px;width:285.6px;height:1.4px;background:#3a3a3a;"></div>
<div style="left:1627.5px;top:242.75px;width:285.6px;height:1.4px;background:#3a3a3a;"></div>
<div style="left:1627.5px;top:274.55px;width:285.6px;height:1.4px;background:#3a3a3a;"></div>
<div style="left:1627.5px;top:300.75px;width:285.6px;height:1.4px;background:#3a3a3a;"></div>
<div style="left:1627.5px;top:331.55px;width:285.6px;height:1.4px;background:#3a3a3a;"></div>
<div style="left:1627.5px;top:363.15px;width:285.6px;height:1.4px;background:#3a3a3a;"></div>
<div style="left:1627.5px;top:394.65px;width:285.6px;height:1.4px;background:#3a3a3a;"></div>
<div style="left:1626.8px;top:94.85px;width:1.4px;height:301.2px;background:#3a3a3a;"></div>
<div style="left:1911.7px;top:94.85px;width:1.4px;height:301.2px;background:#3a3a3a;"></div>
<div style="left:1768.8px;top:95.5px;width:1.4px;height:205.9px;background:#3a3a3a;"></div>
<div style="left:1768.8px;top:332.2px;width:1.4px;height:63.1px;background:#3a3a3a;"></div>
<span class="t" style="left:1653.4px;top:105.43px;font-size:16px;color:#f2f2f2;transform:scaleX(0.9012);transform-origin:left center;">Track Count</span>
<span class="t" style="left:1653.4px;top:137.43px;font-size:16px;color:#f2f2f2;transform:scaleX(0.8938);transform-origin:left center;">ID</span>
<span class="t" style="left:1653.4px;top:164.98px;font-size:16px;color:#f2f2f2;transform:scaleX(0.9024);transform-origin:left center;">Lock</span>
<span class="t" style="left:1653.4px;top:191.93px;font-size:16px;color:#f2f2f2;transform:scaleX(0.9251);transform-origin:left center;">Background</span>
<span class="t" style="left:1653.4px;top:222.38px;font-size:16px;color:#f2f2f2;transform:scaleX(0.9344);transform-origin:left center;">Foreground</span>
<span class="t" style="left:1653.4px;top:253.28px;font-size:16px;color:#f2f2f2;transform:scaleX(0.8963);transform-origin:left center;">Text</span>
<span class="t" style="left:1653.4px;top:282.28px;font-size:16px;color:#f2f2f2;transform:scaleX(0.9514);transform-origin:left center;">Text Alignment</span>
<span class="t" style="left:1653.4px;top:310.78px;font-size:16px;color:#f2f2f2;transform:scaleX(0.9290);transform-origin:left center;">Location</span>
<span class="t" style="left:1653.4px;top:341.98px;font-size:16px;color:#f2f2f2;transform:scaleX(0.8714);transform-origin:left center;">X</span>
<span class="t" style="left:1653.4px;top:373.53px;font-size:16px;color:#f2f2f2;transform:scaleX(0.8433);transform-origin:left center;">Y</span>
<span class="t" style="left:1776.4px;top:104.73px;font-size:16px;color:#f2f2f2;transform:scaleX(0.9215);transform-origin:left center;">4</span>
<div style="left:1776px;top:126px;width:130.2px;height:1.2px;background:#cfcfcf;"></div>
<span class="t" style="left:1776.4px;top:136.73px;font-size:16px;color:#f2f2f2;transform:scaleX(0.9093);transform-origin:left center;">GainSharingAM1</span>
<div style="left:1776px;top:158.1px;width:130.2px;height:1.2px;background:#cfcfcf;"></div>
<span class="t" style="left:1776.4px;top:341.28px;font-size:16px;color:#f2f2f2;transform:scaleX(0.9102);transform-origin:left center;">430</span>
<div style="left:1776px;top:362.4px;width:130.2px;height:1.2px;background:#969696;"></div>
<span class="t" style="left:1776.4px;top:372.83px;font-size:16px;color:#f2f2f2;transform:scaleX(0.9102);transform-origin:left center;">140</span>
<div style="left:1776px;top:393.9px;width:130.2px;height:1.2px;background:#cfcfcf;"></div>
<div style="left:1776px;top:244.4px;width:130.2px;height:30.6px;overflow:hidden;"><span class="t" style="left:0.4px;top:7.68px;font-size:16px;color:#f2f2f2;transform:scaleX(0.925);transform-origin:left center;">Gain Sharing Auto Mixer</span></div>
<div style="left:1776px;top:273.8px;width:130.2px;height:1.2px;background:#cfcfcf;"></div>
<div style="left:1778.8px;top:163.5px;width:17.2px;height:16.3px;border:1.9px solid #bcbcbc;border-radius:2.2px;"></div>
<div style="left:1779.2px;top:186px;width:123.8px;height:24px;background:#9bd766;box-shadow:0 0 0 1px #2e2e2e;"></div>
<div style="left:1779.2px;top:216.8px;width:123.8px;height:23.9px;background:#0a0a0a;box-shadow:0 0 0 1px #2e2e2e;"></div>
<span class="t" style="left:1782.6px;top:282.93px;font-size:13.33px;color:#f2f2f2;transform:scaleX(0.9322);transform-origin:left center;">Center</span>
<div style="left:1881.3px;top:276px;width:24.9px;height:24.7px;background:#5d6370;"></div>
<svg style="left:1887.8px;top:285.3px;" width="11" height="6" viewBox="0 0 11 6"><path d="M0.2 0.3 H10.4 L5.3 5.6 Z" fill="#cfcfcf"/></svg>
<svg style="left:1634.7px;top:314px;" width="10" height="6" viewBox="0 0 10 6"><path d="M0.2 0.3 H9.6 L4.9 5.4 Z" fill="#d6d6d6"/></svg>
<div style="left:459.7px;top:416.3px;width:770.9px;height:531.8px;background:#7e7e7e;"></div>
<div style="left:460.3px;top:416.3px;width:769.7px;height:531.1px;background:#5b5b5b;"></div>
<div style="left:460.3px;top:416.3px;width:769.7px;height:24.6px;background:#4885d0;"></div>
<span class="t" style="left:472.5px;top:422.48px;font-size:16px;color:#fff;transform:scaleX(0.9201);transform-origin:left center;">Gain Sharing Auto Mixer(GainSharingAM1)</span>
<svg style="left:1205.6px;top:422.8px;" width="12" height="12" viewBox="0 0 12 12"><path d="M1.2 1.2 L10.6 10.6 M10.6 1.2 L1.2 10.6" stroke="#fff" stroke-width="2.5"/></svg>
<div style="left:475px;top:446.8px;width:565.3px;height:33.4px;background:#6c6c6c;border-top-left-radius:9px;border-top-right-radius:9px;"></div>
<div style="left:487.5px;top:451.3px;width:62.3px;height:24.3px;background:#4885d0;border-radius:12.2px;border:1.2px solid #a9a9a9;"></div>
<span class="t" style="left:502.79px;top:456.68px;font-size:16px;color:#fff;transform:scaleX(0.9370);transform-origin:center center;">1 - 4</span>
<div style="left:475px;top:482px;width:137.6px;height:460px;background:#6c6c6c;border-bottom-left-radius:9px;border-bottom-right-radius:9px;"></div>
<span class="t" style="left:539.35px;top:485.08px;font-size:16px;color:#f4f4f4;transform:scaleX(0.9300);transform-origin:center center;">1</span>
<div style="left:475px;top:509.7px;width:137.6px;height:46.5px;background:#7d7d7d;"></div>
<div style="left:475px;top:509.7px;width:137.6px;height:1.4px;background:#949494;"></div>
<div style="left:475px;top:554.8px;width:137.6px;height:1.4px;background:#949494;"></div>
<div style="left:481.3px;top:517.5px;width:128.4px;height:30.5px;background:#bebebe;border-radius:6px;border:1.4px solid #111;"></div>
<span class="t" style="left:527.71px;top:526.43px;font-size:16px;color:#0a0a0a;transform:scaleX(0.9750);transform-origin:center center;">Mute</span>
<div style="left:487.7px;top:581.2px;width:12.2px;height:184.5px;background:linear-gradient(#521611 0%,#50220d 8%,#4e3607 15%,#484800 22%,#434a03 33%,#384818 42%,#2b4434 50%,#254141 56%,#264343 80%,#2a4b4b 100%);border:2px solid #0c0c0c;border-radius:3.5px;"></div>
<div style="left:534.8px;top:581.2px;width:12.2px;height:184.5px;background:linear-gradient(#521611 0%,#50220d 8%,#4e3607 15%,#484800 22%,#434a03 33%,#384818 42%,#2b4434 50%,#254141 56%,#264343 80%,#2a4b4b 100%);border:2px solid #0c0c0c;border-radius:3.5px;"></div>
<span class="t" style="left:510.05px;top:579.01px;font-size:10.2px;color:#d4d4d4;transform:scaleX(0.9500);transform-origin:right center;">24</span>
<span class="t" style="left:510.05px;top:604.75px;font-size:10.2px;color:#d4d4d4;transform:scaleX(0.9500);transform-origin:right center;">12</span>
<span class="t" style="left:515.73px;top:630.49px;font-size:10.2px;color:#d4d4d4;transform:scaleX(0.9500);transform-origin:right center;">0</span>
<span class="t" style="left:506.66px;top:656.24px;font-size:10.2px;color:#d4d4d4;transform:scaleX(0.9500);transform-origin:right center;">-12</span>
<span class="t" style="left:506.66px;top:681.98px;font-size:10.2px;color:#d4d4d4;transform:scaleX(0.9500);transform-origin:right center;">-24</span>
<span class="t" style="left:506.66px;top:707.73px;font-size:10.2px;color:#d4d4d4;transform:scaleX(0.9500);transform-origin:right center;">-32</span>
<span class="t" style="left:506.66px;top:733.47px;font-size:10.2px;color:#d4d4d4;transform:scaleX(0.9500);transform-origin:right center;">-48</span>
<span class="t" style="left:506.66px;top:759.21px;font-size:10.2px;color:#d4d4d4;transform:scaleX(0.9500);transform-origin:right center;">-60</span>
<span class="t" style="left:596.3px;top:576.09px;font-size:9.8px;color:#d4d4d4;transform:scaleX(0.9000);transform-origin:left center;">24</span>
<span class="t" style="left:596.3px;top:599.24px;font-size:9.8px;color:#d4d4d4;transform:scaleX(0.9000);transform-origin:left center;">18</span>
<span class="t" style="left:596.3px;top:622.39px;font-size:9.8px;color:#d4d4d4;transform:scaleX(0.9000);transform-origin:left center;">12</span>
<span class="t" style="left:596.3px;top:645.54px;font-size:9.8px;color:#d4d4d4;transform:scaleX(0.9000);transform-origin:left center;">6</span>
<span class="t" style="left:596.3px;top:668.69px;font-size:9.8px;color:#d4d4d4;transform:scaleX(0.9000);transform-origin:left center;">0</span>
<span class="t" style="left:596.3px;top:691.84px;font-size:9.8px;color:#d4d4d4;transform:scaleX(0.9000);transform-origin:left center;">-6</span>
<span class="t" style="left:596.3px;top:714.99px;font-size:9.8px;color:#d4d4d4;transform:scaleX(0.9000);transform-origin:left center;">-12</span>
<span class="t" style="left:596.3px;top:738.14px;font-size:9.8px;color:#d4d4d4;transform:scaleX(0.9000);transform-origin:left center;">-18</span>
<span class="t" style="left:596.3px;top:761.29px;font-size:9.8px;color:#d4d4d4;transform:scaleX(0.9000);transform-origin:left center;">-24</span>
<svg style="left:0px;top:0px;" width="1920" height="1019" viewBox="0 0 1920 1019"><path d="M500.4 583.5 H505.8 M525.5 583.5 H534.6 M500.4 596.37 H505.8 M524 596.37 H534.6 M500.4 609.24 H505.8 M525.5 609.24 H534.6 M500.4 622.12 H505.8 M524 622.12 H534.6 M500.4 634.99 H505.8 M525.5 634.99 H534.6 M500.4 647.86 H505.8 M524 647.86 H534.6 M500.4 660.73 H505.8 M525.5 660.73 H534.6 M500.4 673.6 H505.8 M524 673.6 H534.6 M500.4 686.48 H505.8 M525.5 686.48 H534.6 M500.4 699.35 H505.8 M524 699.35 H534.6 M500.4 712.22 H505.8 M525.5 712.22 H534.6 M500.4 725.09 H505.8 M524 725.09 H534.6 M500.4 737.96 H505.8 M525.5 737.96 H534.6 M500.4 750.84 H505.8 M524 750.84 H534.6 M500.4 763.71 H505.8 M525.5 763.71 H534.6 M584.5 580.8 H593.8 M584.5 592.38 H593.8 M584.5 603.95 H593.8 M584.5 615.52 H593.8 M584.5 627.1 H593.8 M584.5 638.67 H593.8 M584.5 650.25 H593.8 M584.5 661.82 H593.8 M584.5 673.4 H593.8 M584.5 684.97 H593.8 M584.5 696.55 H593.8 M584.5 708.12 H593.8 M584.5 719.7 H593.8 M584.5 731.27 H593.8 M584.5 742.85 H593.8 M584.5 754.42 H593.8 M584.5 766 H593.8" stroke="#b8b8b8" stroke-width="1.3" fill="none"/></svg>
<div style="left:581.1px;top:579.6px;width:3.3px;height:189.8px;background:#060606;border-radius:1.6px;"></div>
<div style="left:567.2px;top:651.2px;width:30.5px;height:47.6px;background:linear-gradient(#e9e9e9,#d0d0d0 30%,#a8a8a8 70%,#8e8e8e);border:2.4px solid #0a0a0a;border-radius:7.5px;box-shadow:0 3px 4px 1px rgba(0,0,0,.55);"><div style="left:3.9px;top:17.6px;width:17.8px;height:1.1px;background:#383838"></div><div style="left:3.9px;top:21.1px;width:17.8px;height:1.1px;background:#383838"></div><div style="left:3.9px;top:24.6px;width:17.8px;height:1.1px;background:#383838"></div></div>
<div style="left:476.2px;top:806.3px;width:40.6px;height:24.3px;background:#444;border-radius:7px;"></div>
<span class="t" style="left:477.6px;top:812.73px;font-size:13.33px;color:#f4f4f4;transform:scaleX(0.9000);transform-origin:center center;">-100.0</span>
<div style="left:523.4px;top:806.3px;width:40.6px;height:24.3px;background:#444;border-radius:7px;"></div>
<span class="t" style="left:524.8px;top:812.73px;font-size:13.33px;color:#f4f4f4;transform:scaleX(0.9000);transform-origin:center center;">-100.0</span>
<div style="left:570.8px;top:806.3px;width:40.6px;height:24.3px;background:#444;border-radius:7px;"></div>
<span class="t" style="left:581.83px;top:812.73px;font-size:13.33px;color:#f4f4f4;transform:scaleX(0.9000);transform-origin:center center;">0.0</span>
<div style="left:475px;top:837.5px;width:137.6px;height:77.3px;background:#7d7d7d;"></div>
<div style="left:475px;top:837.5px;width:137.6px;height:1.4px;background:#949494;"></div>
<div style="left:475px;top:913.4px;width:137.6px;height:1.4px;background:#a0a0a0;"></div>
<div style="left:494px;top:848.2px;width:18.2px;height:18.2px;background:#626262;border-radius:50%;border:1.4px solid #3a3a3a;"></div>
<div style="left:529.2px;top:842.2px;width:76.4px;height:30.4px;background:#bebebe;border-radius:6px;border:1.4px solid #111;"></div>
<span class="t" style="left:545.61px;top:851.08px;font-size:16px;color:#0a0a0a;transform:scaleX(0.9170);transform-origin:center center;">Active</span>
<span class="t" style="left:481.3px;top:889.43px;font-size:13.33px;color:#f4f4f4;transform:scaleX(0.9548);transform-origin:left center;">Priority</span>
<div style="left:529.2px;top:880.3px;width:76.4px;height:29.5px;background:#4b4b4b;border-radius:6px;border:1.3px solid #141414;overflow:hidden;"><div style="left:50.3px;top:0;width:24.8px;height:100%;background:#6a6a6a"></div></div>
<span class="t" style="left:550.55px;top:888.43px;font-size:16px;color:#f4f4f4;transform:scaleX(0.9300);transform-origin:center center;">5</span>
<svg style="left:589.3px;top:888.15px;" width="9" height="4.8" viewBox="0 0 9 4.8"><path d="M0 4.8 L4.5 0 L9 4.8 Z" fill="#e2e2e2"/></svg>
<svg style="left:589.3px;top:899.15px;" width="9" height="4.8" viewBox="0 0 9 4.8"><path d="M0 0 L4.5 4.8 L9 0 Z" fill="#e2e2e2"/></svg>
<span class="t" style="left:539.35px;top:921.88px;font-size:16px;color:#f4f4f4;transform:scaleX(0.9300);transform-origin:center center;">1</span>
<div style="left:617.5px;top:482px;width:137.6px;height:460px;background:#6c6c6c;border-bottom-left-radius:9px;border-bottom-right-radius:9px;"></div>
<span class="t" style="left:681.85px;top:485.08px;font-size:16px;color:#f4f4f4;transform:scaleX(0.9300);transform-origin:center center;">2</span>
<div style="left:617.5px;top:509.7px;width:137.6px;height:46.5px;background:#7d7d7d;"></div>
<div style="left:617.5px;top:509.7px;width:137.6px;height:1.4px;background:#949494;"></div>
<div style="left:617.5px;top:554.8px;width:137.6px;height:1.4px;background:#949494;"></div>
<div style="left:623.8px;top:517.5px;width:128.4px;height:30.5px;background:#bebebe;border-radius:6px;border:1.4px solid #111;"></div>
<span class="t" style="left:670.21px;top:526.43px;font-size:16px;color:#0a0a0a;transform:scaleX(0.9750);transform-origin:center center;">Mute</span>
<div style="left:630.2px;top:581.2px;width:12.2px;height:184.5px;background:linear-gradient(#521611 0%,#50220d 8%,#4e3607 15%,#484800 22%,#434a03 33%,#384818 42%,#2b4434 50%,#254141 56%,#264343 80%,#2a4b4b 100%);border:2px solid #0c0c0c;border-radius:3.5px;"></div>
<div style="left:677.3px;top:581.2px;width:12.2px;height:184.5px;background:linear-gradient(#521611 0%,#50220d 8%,#4e3607 15%,#484800 22%,#434a03 33%,#384818 42%,#2b4434 50%,#254141 56%,#264343 80%,#2a4b4b 100%);border:2px solid #0c0c0c;border-radius:3.5px;"></div>
<span class="t" style="left:652.55px;top:579.01px;font-size:10.2px;color:#d4d4d4;transform:scaleX(0.9500);transform-origin:right center;">24</span>
<span class="t" style="left:652.55px;top:604.75px;font-size:10.2px;color:#d4d4d4;transform:scaleX(0.9500);transform-origin:right center;">12</span>
<span class="t" style="left:658.23px;top:630.49px;font-size:10.2px;color:#d4d4d4;transform:scaleX(0.9500);transform-origin:right center;">0</span>
<span class="t" style="left:649.16px;top:656.24px;font-size:10.2px;color:#d4d4d4;transform:scaleX(0.9500);transform-origin:right center;">-12</span>
<span class="t" style="left:649.16px;top:681.98px;font-size:10.2px;color:#d4d4d4;transform:scaleX(0.9500);transform-origin:right center;">-24</span>
<span class="t" style="left:649.16px;top:707.73px;font-size:10.2px;color:#d4d4d4;transform:scaleX(0.9500);transform-origin:right center;">-32</span>
<span class="t" style="left:649.16px;top:733.47px;font-size:10.2px;color:#d4d4d4;transform:scaleX(0.9500);transform-origin:right center;">-48</span>
<span class="t" style="left:649.16px;top:759.21px;font-size:10.2px;color:#d4d4d4;transform:scaleX(0.9500);transform-origin:right center;">-60</span>
<span class="t" style="left:738.8px;top:576.09px;font-size:9.8px;color:#d4d4d4;transform:scaleX(0.9000);transform-origin:left center;">24</span>
<span class="t" style="left:738.8px;top:599.24px;font-size:9.8px;color:#d4d4d4;transform:scaleX(0.9000);transform-origin:left center;">18</span>
<span class="t" style="left:738.8px;top:622.39px;font-size:9.8px;color:#d4d4d4;transform:scaleX(0.9000);transform-origin:left center;">12</span>
<span class="t" style="left:738.8px;top:645.54px;font-size:9.8px;color:#d4d4d4;transform:scaleX(0.9000);transform-origin:left center;">6</span>
<span class="t" style="left:738.8px;top:668.69px;font-size:9.8px;color:#d4d4d4;transform:scaleX(0.9000);transform-origin:left center;">0</span>
<span class="t" style="left:738.8px;top:691.84px;font-size:9.8px;color:#d4d4d4;transform:scaleX(0.9000);transform-origin:left center;">-6</span>
<span class="t" style="left:738.8px;top:714.99px;font-size:9.8px;color:#d4d4d4;transform:scaleX(0.9000);transform-origin:left center;">-12</span>
<span class="t" style="left:738.8px;top:738.14px;font-size:9.8px;color:#d4d4d4;transform:scaleX(0.9000);transform-origin:left center;">-18</span>
<span class="t" style="left:738.8px;top:761.29px;font-size:9.8px;color:#d4d4d4;transform:scaleX(0.9000);transform-origin:left center;">-24</span>
<svg style="left:0px;top:0px;" width="1920" height="1019" viewBox="0 0 1920 1019"><path d="M642.9 583.5 H648.3 M668 583.5 H677.1 M642.9 596.37 H648.3 M666.5 596.37 H677.1 M642.9 609.24 H648.3 M668 609.24 H677.1 M642.9 622.12 H648.3 M666.5 622.12 H677.1 M642.9 634.99 H648.3 M668 634.99 H677.1 M642.9 647.86 H648.3 M666.5 647.86 H677.1 M642.9 660.73 H648.3 M668 660.73 H677.1 M642.9 673.6 H648.3 M666.5 673.6 H677.1 M642.9 686.48 H648.3 M668 686.48 H677.1 M642.9 699.35 H648.3 M666.5 699.35 H677.1 M642.9 712.22 H648.3 M668 712.22 H677.1 M642.9 725.09 H648.3 M666.5 725.09 H677.1 M642.9 737.96 H648.3 M668 737.96 H677.1 M642.9 750.84 H648.3 M666.5 750.84 H677.1 M642.9 763.71 H648.3 M668 763.71 H677.1 M727 580.8 H736.3 M727 592.38 H736.3 M727 603.95 H736.3 M727 615.52 H736.3 M727 627.1 H736.3 M727 638.67 H736.3 M727 650.25 H736.3 M727 661.82 H736.3 M727 673.4 H736.3 M727 684.97 H736.3 M727 696.55 H736.3 M727 708.12 H736.3 M727 719.7 H736.3 M727 731.27 H736.3 M727 742.85 H736.3 M727 754.42 H736.3 M727 766 H736.3" stroke="#b8b8b8" stroke-width="1.3" fill="none"/></svg>
<div style="left:723.6px;top:579.6px;width:3.3px;height:189.8px;background:#060606;border-radius:1.6px;"></div>
<div style="left:709.7px;top:651.2px;width:30.5px;height:47.6px;background:linear-gradient(#e9e9e9,#d0d0d0 30%,#a8a8a8 70%,#8e8e8e);border:2.4px solid #0a0a0a;border-radius:7.5px;box-shadow:0 3px 4px 1px rgba(0,0,0,.55);"><div style="left:3.9px;top:17.6px;width:17.8px;height:1.1px;background:#383838"></div><div style="left:3.9px;top:21.1px;width:17.8px;height:1.1px;background:#383838"></div><div style="left:3.9px;top:24.6px;width:17.8px;height:1.1px;background:#383838"></div></div>
<div style="left:618.7px;top:806.3px;width:40.6px;height:24.3px;background:#444;border-radius:7px;"></div>
<span class="t" style="left:620.1px;top:812.73px;font-size:13.33px;color:#f4f4f4;transform:scaleX(0.9000);transform-origin:center center;">-100.0</span>
<div style="left:665.9px;top:806.3px;width:40.6px;height:24.3px;background:#444;border-radius:7px;"></div>
<span class="t" style="left:667.3px;top:812.73px;font-size:13.33px;color:#f4f4f4;transform:scaleX(0.9000);transform-origin:center center;">-100.0</span>
<div style="left:713.3px;top:806.3px;width:40.6px;height:24.3px;background:#444;border-radius:7px;"></div>
<span class="t" style="left:724.33px;top:812.73px;font-size:13.33px;color:#f4f4f4;transform:scaleX(0.9000);transform-origin:center center;">0.0</span>
<div style="left:617.5px;top:837.5px;width:137.6px;height:77.3px;background:#7d7d7d;"></div>
<div style="left:617.5px;top:837.5px;width:137.6px;height:1.4px;background:#949494;"></div>
<div style="left:617.5px;top:913.4px;width:137.6px;height:1.4px;background:#a0a0a0;"></div>
<div style="left:636.5px;top:848.2px;width:18.2px;height:18.2px;background:#626262;border-radius:50%;border:1.4px solid #3a3a3a;"></div>
<div style="left:671.7px;top:842.2px;width:76.4px;height:30.4px;background:#bebebe;border-radius:6px;border:1.4px solid #111;"></div>
<span class="t" style="left:688.11px;top:851.08px;font-size:16px;color:#0a0a0a;transform:scaleX(0.9170);transform-origin:center center;">Active</span>
<span class="t" style="left:623.8px;top:889.43px;font-size:13.33px;color:#f4f4f4;transform:scaleX(0.9548);transform-origin:left center;">Priority</span>
<div style="left:671.7px;top:880.3px;width:76.4px;height:29.5px;background:#4b4b4b;border-radius:6px;border:1.3px solid #141414;overflow:hidden;"><div style="left:50.3px;top:0;width:24.8px;height:100%;background:#6a6a6a"></div></div>
<span class="t" style="left:693.05px;top:888.43px;font-size:16px;color:#f4f4f4;transform:scaleX(0.9300);transform-origin:center center;">5</span>
<svg style="left:731.8px;top:888.15px;" width="9" height="4.8" viewBox="0 0 9 4.8"><path d="M0 4.8 L4.5 0 L9 4.8 Z" fill="#e2e2e2"/></svg>
<svg style="left:731.8px;top:899.15px;" width="9" height="4.8" viewBox="0 0 9 4.8"><path d="M0 0 L4.5 4.8 L9 0 Z" fill="#e2e2e2"/></svg>
<span class="t" style="left:681.85px;top:921.88px;font-size:16px;color:#f4f4f4;transform:scaleX(0.9300);transform-origin:center center;">2</span>
<div style="left:760px;top:482px;width:137.6px;height:460px;background:#6c6c6c;border-bottom-left-radius:9px;border-bottom-right-radius:9px;"></div>
<span class="t" style="left:824.35px;top:485.08px;font-size:16px;color:#f4f4f4;transform:scaleX(0.9300);transform-origin:center center;">3</span>
<div style="left:760px;top:509.7px;width:137.6px;height:46.5px;background:#7d7d7d;"></div>
<div style="left:760px;top:509.7px;width:137.6px;height:1.4px;background:#949494;"></div>
<div style="left:760px;top:554.8px;width:137.6px;height:1.4px;background:#949494;"></div>
<div style="left:766.3px;top:517.5px;width:128.4px;height:30.5px;background:#bebebe;border-radius:6px;border:1.4px solid #111;"></div>
<span class="t" style="left:812.71px;top:526.43px;font-size:16px;color:#0a0a0a;transform:scaleX(0.9750);transform-origin:center center;">Mute</span>
<div style="left:772.7px;top:581.2px;width:12.2px;height:184.5px;background:linear-gradient(#521611 0%,#50220d 8%,#4e3607 15%,#484800 22%,#434a03 33%,#384818 42%,#2b4434 50%,#254141 56%,#264343 80%,#2a4b4b 100%);border:2px solid #0c0c0c;border-radius:3.5px;"></div>
<div style="left:819.8px;top:581.2px;width:12.2px;height:184.5px;background:linear-gradient(#521611 0%,#50220d 8%,#4e3607 15%,#484800 22%,#434a03 33%,#384818 42%,#2b4434 50%,#254141 56%,#264343 80%,#2a4b4b 100%);border:2px solid #0c0c0c;border-radius:3.5px;"></div>
<span class="t" style="left:795.05px;top:579.01px;font-size:10.2px;color:#d4d4d4;transform:scaleX(0.9500);transform-origin:right center;">24</span>
<span class="t" style="left:795.05px;top:604.75px;font-size:10.2px;color:#d4d4d4;transform:scaleX(0.9500);transform-origin:right center;">12</span>
<span class="t" style="left:800.73px;top:630.49px;font-size:10.2px;color:#d4d4d4;transform:scaleX(0.9500);transform-origin:right center;">0</span>
<span class="t" style="left:791.66px;top:656.24px;font-size:10.2px;color:#d4d4d4;transform:scaleX(0.9500);transform-origin:right center;">-12</span>
<span class="t" style="left:791.66px;top:681.98px;font-size:10.2px;color:#d4d4d4;transform:scaleX(0.9500);transform-origin:right center;">-24</span>
<span class="t" style="left:791.66px;top:707.73px;font-size:10.2px;color:#d4d4d4;transform:scaleX(0.9500);transform-origin:right center;">-32</span>
<span class="t" style="left:791.66px;top:733.47px;font-size:10.2px;color:#d4d4d4;transform:scaleX(0.9500);transform-origin:right center;">-48</span>
<span class="t" style="left:791.66px;top:759.21px;font-size:10.2px;color:#d4d4d4;transform:scaleX(0.9500);transform-origin:right center;">-60</span>
<span class="t" style="left:881.3px;top:576.09px;font-size:9.8px;color:#d4d4d4;transform:scaleX(0.9000);transform-origin:left center;">24</span>
<span class="t" style="left:881.3px;top:599.24px;font-size:9.8px;color:#d4d4d4;transform:scaleX(0.9000);transform-origin:left center;">18</span>
<span class="t" style="left:881.3px;top:622.39px;font-size:9.8px;color:#d4d4d4;transform:scaleX(0.9000);transform-origin:left center;">12</span>
<span class="t" style="left:881.3px;top:645.54px;font-size:9.8px;color:#d4d4d4;transform:scaleX(0.9000);transform-origin:left center;">6</span>
<span class="t" style="left:881.3px;top:668.69px;font-size:9.8px;color:#d4d4d4;transform:scaleX(0.9000);transform-origin:left center;">0</span>
<span class="t" style="left:881.3px;top:691.84px;font-size:9.8px;color:#d4d4d4;transform:scaleX(0.9000);transform-origin:left center;">-6</span>
<span class="t" style="left:881.3px;top:714.99px;font-size:9.8px;color:#d4d4d4;transform:scaleX(0.9000);transform-origin:left center;">-12</span>
<span class="t" style="left:881.3px;top:738.14px;font-size:9.8px;color:#d4d4d4;transform:scaleX(0.9000);transform-origin:left center;">-18</span>
<span class="t" style="left:881.3px;top:761.29px;font-size:9.8px;color:#d4d4d4;transform:scaleX(0.9000);transform-origin:left center;">-24</span>
<svg style="left:0px;top:0px;" width="1920" height="1019" viewBox="0 0 1920 1019"><path d="M785.4 583.5 H790.8 M810.5 583.5 H819.6 M785.4 596.37 H790.8 M809 596.37 H819.6 M785.4 609.24 H790.8 M810.5 609.24 H819.6 M785.4 622.12 H790.8 M809 622.12 H819.6 M785.4 634.99 H790.8 M810.5 634.99 H819.6 M785.4 647.86 H790.8 M809 647.86 H819.6 M785.4 660.73 H790.8 M810.5 660.73 H819.6 M785.4 673.6 H790.8 M809 673.6 H819.6 M785.4 686.48 H790.8 M810.5 686.48 H819.6 M785.4 699.35 H790.8 M809 699.35 H819.6 M785.4 712.22 H790.8 M810.5 712.22 H819.6 M785.4 725.09 H790.8 M809 725.09 H819.6 M785.4 737.96 H790.8 M810.5 737.96 H819.6 M785.4 750.84 H790.8 M809 750.84 H819.6 M785.4 763.71 H790.8 M810.5 763.71 H819.6 M869.5 580.8 H878.8 M869.5 592.38 H878.8 M869.5 603.95 H878.8 M869.5 615.52 H878.8 M869.5 627.1 H878.8 M869.5 638.67 H878.8 M869.5 650.25 H878.8 M869.5 661.82 H878.8 M869.5 673.4 H878.8 M869.5 684.97 H878.8 M869.5 696.55 H878.8 M869.5 708.12 H878.8 M869.5 719.7 H878.8 M869.5 731.27 H878.8 M869.5 742.85 H878.8 M869.5 754.42 H878.8 M869.5 766 H878.8" stroke="#b8b8b8" stroke-width="1.3" fill="none"/></svg>
<div style="left:866.1px;top:579.6px;width:3.3px;height:189.8px;background:#060606;border-radius:1.6px;"></div>
<div style="left:852.2px;top:651.2px;width:30.5px;height:47.6px;background:linear-gradient(#e9e9e9,#d0d0d0 30%,#a8a8a8 70%,#8e8e8e);border:2.4px solid #0a0a0a;border-radius:7.5px;box-shadow:0 3px 4px 1px rgba(0,0,0,.55);"><div style="left:3.9px;top:17.6px;width:17.8px;height:1.1px;background:#383838"></div><div style="left:3.9px;top:21.1px;width:17.8px;height:1.1px;background:#383838"></div><div style="left:3.9px;top:24.6px;width:17.8px;height:1.1px;background:#383838"></div></div>
<div style="left:761.2px;top:806.3px;width:40.6px;height:24.3px;background:#444;border-radius:7px;"></div>
<span class="t" style="left:762.6px;top:812.73px;font-size:13.33px;color:#f4f4f4;transform:scaleX(0.9000);transform-origin:center center;">-100.0</span>
<div style="left:808.4px;top:806.3px;width:40.6px;height:24.3px;background:#444;border-radius:7px;"></div>
<span class="t" style="left:809.8px;top:812.73px;font-size:13.33px;color:#f4f4f4;transform:scaleX(0.9000);transform-origin:center center;">-100.0</span>
<div style="left:855.8px;top:806.3px;width:40.6px;height:24.3px;background:#444;border-radius:7px;"></div>
<span class="t" style="left:866.83px;top:812.73px;font-size:13.33px;color:#f4f4f4;transform:scaleX(0.9000);transform-origin:center center;">0.0</span>
<div style="left:760px;top:837.5px;width:137.6px;height:77.3px;background:#7d7d7d;"></div>
<div style="left:760px;top:837.5px;width:137.6px;height:1.4px;background:#949494;"></div>
<div style="left:760px;top:913.4px;width:137.6px;height:1.4px;background:#a0a0a0;"></div>
<div style="left:779px;top:848.2px;width:18.2px;height:18.2px;background:#626262;border-radius:50%;border:1.4px solid #3a3a3a;"></div>
<div style="left:814.2px;top:842.2px;width:76.4px;height:30.4px;background:#bebebe;border-radius:6px;border:1.4px solid #111;"></div>
<span class="t" style="left:830.61px;top:851.08px;font-size:16px;color:#0a0a0a;transform:scaleX(0.9170);transform-origin:center center;">Active</span>
<span class="t" style="left:766.3px;top:889.43px;font-size:13.33px;color:#f4f4f4;transform:scaleX(0.9548);transform-origin:left center;">Priority</span>
<div style="left:814.2px;top:880.3px;width:76.4px;height:29.5px;background:#4b4b4b;border-radius:6px;border:1.3px solid #141414;overflow:hidden;"><div style="left:50.3px;top:0;width:24.8px;height:100%;background:#6a6a6a"></div></div>
<span class="t" style="left:835.55px;top:888.43px;font-size:16px;color:#f4f4f4;transform:scaleX(0.9300);transform-origin:center center;">5</span>
<svg style="left:874.3px;top:888.15px;" width="9" height="4.8" viewBox="0 0 9 4.8"><path d="M0 4.8 L4.5 0 L9 4.8 Z" fill="#e2e2e2"/></svg>
<svg style="left:874.3px;top:899.15px;" width="9" height="4.8" viewBox="0 0 9 4.8"><path d="M0 0 L4.5 4.8 L9 0 Z" fill="#e2e2e2"/></svg>
<span class="t" style="left:824.35px;top:921.88px;font-size:16px;color:#f4f4f4;transform:scaleX(0.9300);transform-origin:center center;">3</span>
<div style="left:902.5px;top:482px;width:137.6px;height:460px;background:#6c6c6c;border-bottom-left-radius:9px;border-bottom-right-radius:9px;"></div>
<span class="t" style="left:966.85px;top:485.08px;font-size:16px;color:#f4f4f4;transform:scaleX(0.9300);transform-origin:center center;">4</span>
<div style="left:902.5px;top:509.7px;width:137.6px;height:46.5px;background:#7d7d7d;"></div>
<div style="left:902.5px;top:509.7px;width:137.6px;height:1.4px;background:#949494;"></div>
<div style="left:902.5px;top:554.8px;width:137.6px;height:1.4px;background:#949494;"></div>
<div style="left:908.8px;top:517.5px;width:128.4px;height:30.5px;background:#bebebe;border-radius:6px;border:1.4px solid #111;"></div>
<span class="t" style="left:955.21px;top:526.43px;font-size:16px;color:#0a0a0a;transform:scaleX(0.9750);transform-origin:center center;">Mute</span>
<div style="left:915.2px;top:581.2px;width:12.2px;height:184.5px;background:linear-gradient(#521611 0%,#50220d 8%,#4e3607 15%,#484800 22%,#434a03 33%,#384818 42%,#2b4434 50%,#254141 56%,#264343 80%,#2a4b4b 100%);border:2px solid #0c0c0c;border-radius:3.5px;"></div>
<div style="left:962.3px;top:581.2px;width:12.2px;height:184.5px;background:linear-gradient(#521611 0%,#50220d 8%,#4e3607 15%,#484800 22%,#434a03 33%,#384818 42%,#2b4434 50%,#254141 56%,#264343 80%,#2a4b4b 100%);border:2px solid #0c0c0c;border-radius:3.5px;"></div>
<span class="t" style="left:937.55px;top:579.01px;font-size:10.2px;color:#d4d4d4;transform:scaleX(0.9500);transform-origin:right center;">24</span>
<span class="t" style="left:937.55px;top:604.75px;font-size:10.2px;color:#d4d4d4;transform:scaleX(0.9500);transform-origin:right center;">12</span>
<span class="t" style="left:943.23px;top:630.49px;font-size:10.2px;color:#d4d4d4;transform:scaleX(0.9500);transform-origin:right center;">0</span>
<span class="t" style="left:934.16px;top:656.24px;font-size:10.2px;color:#d4d4d4;transform:scaleX(0.9500);transform-origin:right center;">-12</span>
<span class="t" style="left:934.16px;top:681.98px;font-size:10.2px;color:#d4d4d4;transform:scaleX(0.9500);transform-origin:right center;">-24</span>
<span class="t" style="left:934.16px;top:707.73px;font-size:10.2px;color:#d4d4d4;transform:scaleX(0.9500);transform-origin:right center;">-32</span>
<span class="t" style="left:934.16px;top:733.47px;font-size:10.2px;color:#d4d4d4;transform:scaleX(0.9500);transform-origin:right center;">-48</span>
<span class="t" style="left:934.16px;top:759.21px;font-size:10.2px;color:#d4d4d4;transform:scaleX(0.9500);transform-origin:right center;">-60</span>
<span class="t" style="left:1023.8px;top:576.09px;font-size:9.8px;color:#d4d4d4;transform:scaleX(0.9000);transform-origin:left center;">24</span>
<span class="t" style="left:1023.8px;top:599.24px;font-size:9.8px;color:#d4d4d4;transform:scaleX(0.9000);transform-origin:left center;">18</span>
<span class="t" style="left:1023.8px;top:622.39px;font-size:9.8px;color:#d4d4d4;transform:scaleX(0.9000);transform-origin:left center;">12</span>
<span class="t" style="left:1023.8px;top:645.54px;font-size:9.8px;color:#d4d4d4;transform:scaleX(0.9000);transform-origin:left center;">6</span>
<span class="t" style="left:1023.8px;top:668.69px;font-size:9.8px;color:#d4d4d4;transform:scaleX(0.9000);transform-origin:left center;">0</span>
<span class="t" style="left:1023.8px;top:691.84px;font-size:9.8px;color:#d4d4d4;transform:scaleX(0.9000);transform-origin:left center;">-6</span>
<span class="t" style="left:1023.8px;top:714.99px;font-size:9.8px;color:#d4d4d4;transform:scaleX(0.9000);transform-origin:left center;">-12</span>
<span class="t" style="left:1023.8px;top:738.14px;font-size:9.8px;color:#d4d4d4;transform:scaleX(0.9000);transform-origin:left center;">-18</span>
<span class="t" style="left:1023.8px;top:761.29px;font-size:9.8px;color:#d4d4d4;transform:scaleX(0.9000);transform-origin:left center;">-24</span>
<svg style="left:0px;top:0px;" width="1920" height="1019" viewBox="0 0 1920 1019"><path d="M927.9 583.5 H933.3 M953 583.5 H962.1 M927.9 596.37 H933.3 M951.5 596.37 H962.1 M927.9 609.24 H933.3 M953 609.24 H962.1 M927.9 622.12 H933.3 M951.5 622.12 H962.1 M927.9 634.99 H933.3 M953 634.99 H962.1 M927.9 647.86 H933.3 M951.5 647.86 H962.1 M927.9 660.73 H933.3 M953 660.73 H962.1 M927.9 673.6 H933.3 M951.5 673.6 H962.1 M927.9 686.48 H933.3 M953 686.48 H962.1 M927.9 699.35 H933.3 M951.5 699.35 H962.1 M927.9 712.22 H933.3 M953 712.22 H962.1 M927.9 725.09 H933.3 M951.5 725.09 H962.1 M927.9 737.96 H933.3 M953 737.96 H962.1 M927.9 750.84 H933.3 M951.5 750.84 H962.1 M927.9 763.71 H933.3 M953 763.71 H962.1 M1012 580.8 H1021.3 M1012 592.38 H1021.3 M1012 603.95 H1021.3 M1012 615.52 H1021.3 M1012 627.1 H1021.3 M1012 638.67 H1021.3 M1012 650.25 H1021.3 M1012 661.82 H1021.3 M1012 673.4 H1021.3 M1012 684.97 H1021.3 M1012 696.55 H1021.3 M1012 708.12 H1021.3 M1012 719.7 H1021.3 M1012 731.27 H1021.3 M1012 742.85 H1021.3 M1012 754.42 H1021.3 M1012 766 H1021.3" stroke="#b8b8b8" stroke-width="1.3" fill="none"/></svg>
<div style="left:1008.6px;top:579.6px;width:3.3px;height:189.8px;background:#060606;border-radius:1.6px;"></div>
<div style="left:994.7px;top:651.2px;width:30.5px;height:47.6px;background:linear-gradient(#e9e9e9,#d0d0d0 30%,#a8a8a8 70%,#8e8e8e);border:2.4px solid #0a0a0a;border-radius:7.5px;box-shadow:0 3px 4px 1px rgba(0,0,0,.55);"><div style="left:3.9px;top:17.6px;width:17.8px;height:1.1px;background:#383838"></div><div style="left:3.9px;top:21.1px;width:17.8px;height:1.1px;background:#383838"></div><div style="left:3.9px;top:24.6px;width:17.8px;height:1.1px;background:#383838"></div></div>
<div style="left:903.7px;top:806.3px;width:40.6px;height:24.3px;background:#444;border-radius:7px;"></div>
<span class="t" style="left:905.1px;top:812.73px;font-size:13.33px;color:#f4f4f4;transform:scaleX(0.9000);transform-origin:center center;">-100.0</span>
<div style="left:950.9px;top:806.3px;width:40.6px;height:24.3px;background:#444;border-radius:7px;"></div>
<span class="t" style="left:952.3px;top:812.73px;font-size:13.33px;color:#f4f4f4;transform:scaleX(0.9000);transform-origin:center center;">-100.0</span>
<div style="left:998.3px;top:806.3px;width:40.6px;height:24.3px;background:#444;border-radius:7px;"></div>
<span class="t" style="left:1009.33px;top:812.73px;font-size:13.33px;color:#f4f4f4;transform:scaleX(0.9000);transform-origin:center center;">0.0</span>
<div style="left:902.5px;top:837.5px;width:137.6px;height:77.3px;background:#7d7d7d;"></div>
<div style="left:902.5px;top:837.5px;width:137.6px;height:1.4px;background:#949494;"></div>
<div style="left:902.5px;top:913.4px;width:137.6px;height:1.4px;background:#a0a0a0;"></div>
<div style="left:921.5px;top:848.2px;width:18.2px;height:18.2px;background:#626262;border-radius:50%;border:1.4px solid #3a3a3a;"></div>
<div style="left:956.7px;top:842.2px;width:76.4px;height:30.4px;background:#bebebe;border-radius:6px;border:1.4px solid #111;"></div>
<span class="t" style="left:973.11px;top:851.08px;font-size:16px;color:#0a0a0a;transform:scaleX(0.9170);transform-origin:center center;">Active</span>
<span class="t" style="left:908.8px;top:889.43px;font-size:13.33px;color:#f4f4f4;transform:scaleX(0.9548);transform-origin:left center;">Priority</span>
<div style="left:956.7px;top:880.3px;width:76.4px;height:29.5px;background:#4b4b4b;border-radius:6px;border:1.3px solid #141414;overflow:hidden;"><div style="left:50.3px;top:0;width:24.8px;height:100%;background:#6a6a6a"></div></div>
<span class="t" style="left:978.05px;top:888.43px;font-size:16px;color:#f4f4f4;transform:scaleX(0.9300);transform-origin:center center;">5</span>
<svg style="left:1016.8px;top:888.15px;" width="9" height="4.8" viewBox="0 0 9 4.8"><path d="M0 4.8 L4.5 0 L9 4.8 Z" fill="#e2e2e2"/></svg>
<svg style="left:1016.8px;top:899.15px;" width="9" height="4.8" viewBox="0 0 9 4.8"><path d="M0 0 L4.5 4.8 L9 0 Z" fill="#e2e2e2"/></svg>
<span class="t" style="left:966.85px;top:921.88px;font-size:16px;color:#f4f4f4;transform:scaleX(0.9300);transform-origin:center center;">4</span>
<div style="left:1054.7px;top:447px;width:163.1px;height:494.8px;background:#6c6c6c;border-radius:9px;"></div>
<span class="t" style="left:1074px;top:492.48px;font-size:16px;color:#f4f4f4;transform:scaleX(0.8858);transform-origin:left center;">Gain(dBu)</span>
<div style="left:1074px;top:528.2px;width:124.6px;height:29.8px;background:#414141;border-radius:6px;border:1.3px solid #141414;overflow:hidden;"><div style="left:98.5px;top:0;width:24.8px;height:100%;background:#5a5a5a"></div></div>
<span class="t" style="left:1112.78px;top:536.48px;font-size:16px;color:#f4f4f4;transform:scaleX(0.9300);transform-origin:center center;">0.0</span>
<svg style="left:1181.5px;top:536.4px;" width="9" height="4.8" viewBox="0 0 9 4.8"><path d="M0 4.8 L4.5 0 L9 4.8 Z" fill="#e2e2e2"/></svg>
<svg style="left:1181.5px;top:547px;" width="9" height="4.8" viewBox="0 0 9 4.8"><path d="M0 0 L4.5 4.8 L9 0 Z" fill="#e2e2e2"/></svg>
<span class="t" style="left:1074px;top:603.78px;font-size:16px;color:#f4f4f4;transform:scaleX(0.9041);transform-origin:left center;">Slope</span>
<div style="left:1074px;top:639px;width:124.6px;height:29.8px;background:#414141;border-radius:6px;border:1.3px solid #141414;overflow:hidden;"><div style="left:98.5px;top:0;width:24.8px;height:100%;background:#5a5a5a"></div></div>
<span class="t" style="left:1112.78px;top:647.28px;font-size:16px;color:#f4f4f4;transform:scaleX(0.9300);transform-origin:center center;">3.0</span>
<svg style="left:1181.5px;top:647.2px;" width="9" height="4.8" viewBox="0 0 9 4.8"><path d="M0 4.8 L4.5 0 L9 4.8 Z" fill="#7e7e7e"/></svg>
<svg style="left:1181.5px;top:657.8px;" width="9" height="4.8" viewBox="0 0 9 4.8"><path d="M0 0 L4.5 4.8 L9 0 Z" fill="#e2e2e2"/></svg>
<span class="t" style="left:1074px;top:714.48px;font-size:16px;color:#f4f4f4;transform:scaleX(0.8747);transform-origin:left center;">Response(ms)</span>
<div style="left:1074px;top:750.6px;width:124.6px;height:29px;background:#414141;border-radius:6px;border:1.3px solid #141414;overflow:hidden;"><div style="left:98.5px;top:0;width:24.8px;height:100%;background:#5a5a5a"></div></div>
<span class="t" style="left:1119.45px;top:758.48px;font-size:16px;color:#f4f4f4;transform:scaleX(0.9300);transform-origin:center center;">5</span>
<svg style="left:1181.5px;top:758.4px;" width="9" height="4.8" viewBox="0 0 9 4.8"><path d="M0 4.8 L4.5 0 L9 4.8 Z" fill="#e2e2e2"/></svg>
<svg style="left:1181.5px;top:769px;" width="9" height="4.8" viewBox="0 0 9 4.8"><path d="M0 0 L4.5 4.8 L9 0 Z" fill="#7e7e7e"/></svg>
<div style="left:1093px;top:805.6px;width:86.7px;height:30.4px;background:#b4b4b4;border-radius:6px;border:1.4px solid #111;"></div>
<span class="t" style="left:1118.56px;top:814.48px;font-size:16px;color:#0a0a0a;transform:scaleX(0.9750);transform-origin:center center;">Mute</span>
<div style="left:1090.3px;top:899px;width:92.2px;height:30.7px;background:#b4b4b4;border-radius:6px;border:1.4px solid #111;"></div>
<span class="t" style="left:1114.61px;top:908.03px;font-size:16px;color:#0a0a0a;transform:scaleX(0.9170);transform-origin:center center;">Active</span>
</body></html>
